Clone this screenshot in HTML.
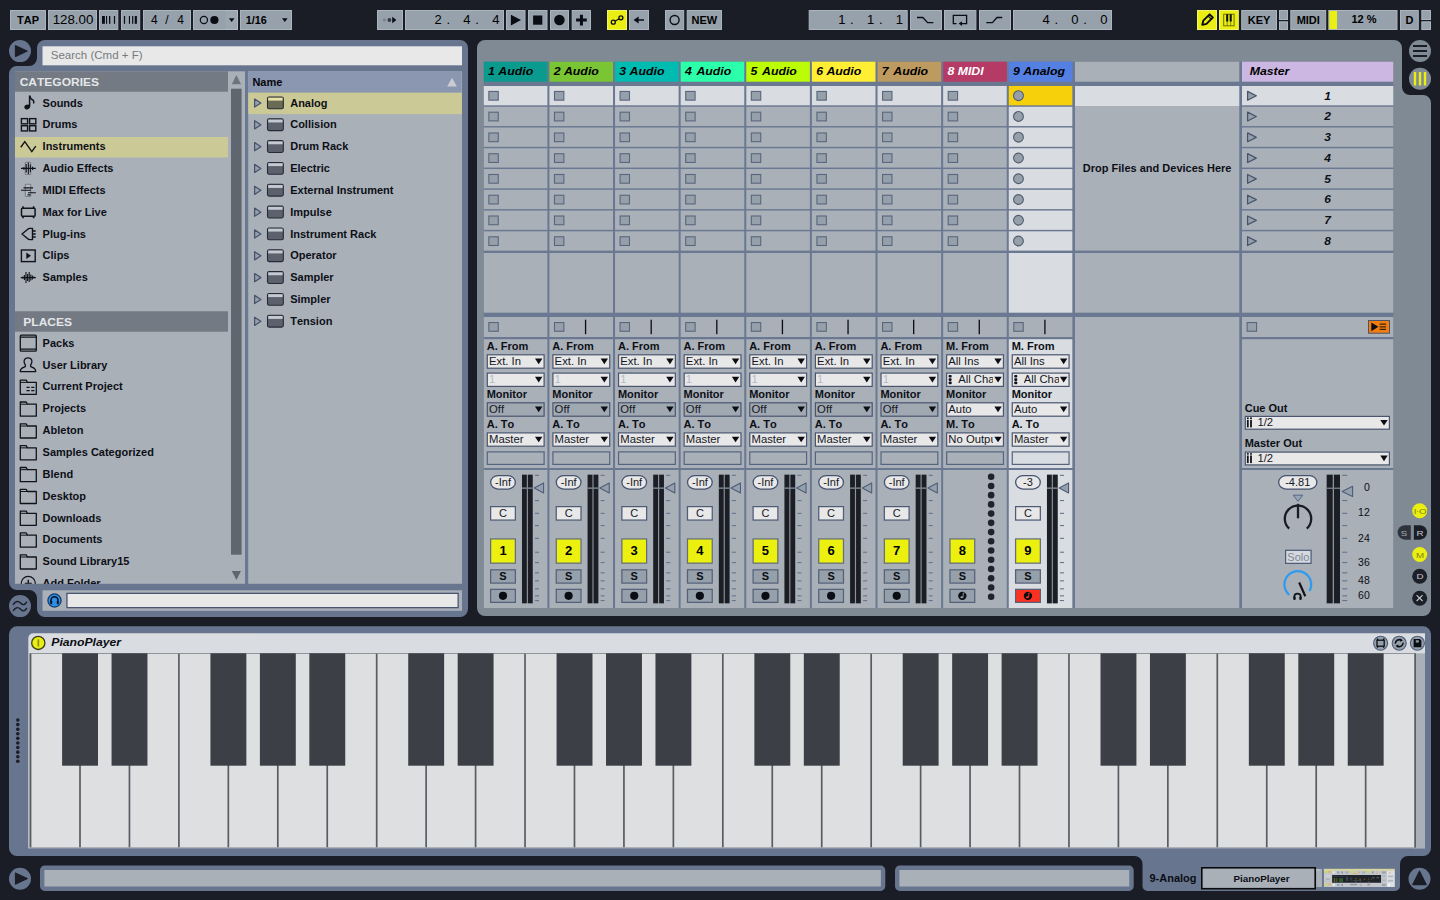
<!DOCTYPE html>
<html lang="en"><head><meta charset="utf-8"><title>Live Set</title>
<style>
*{margin:0;padding:0}
html,body{width:1440px;height:900px;overflow:hidden;background:#1a1d25}
body{position:relative;font-family:"Liberation Sans",sans-serif;font-kerning:none}
body div{position:absolute;box-sizing:border-box}
.t{white-space:nowrap}
svg{position:absolute;left:0;top:0;pointer-events:none}
</style></head>
<body>
<svg width="1440" height="900" viewBox="0 0 1440 900">
<path fill="#68758f" d="M45,40 H460 a8,8 0 0 1 8,8 V609 a8,8 0 0 1 -8,8 H45 a8,8 0 0 1 -8,-8 V598 a8,8 0 0 0 -8,-8 H17 a8,8 0 0 1 -8,-8 V74 a8,8 0 0 1 8,-8 H29 a8,8 0 0 0 8,-8 V48 a8,8 0 0 1 8,-8 Z"/>
<path fill="#808a94" d="M485,40 H1394 a8,8 0 0 1 8,8 V87 a8,8 0 0 0 8,8 H1423 a8,8 0 0 1 8,8 V608 a8,8 0 0 1 -8,8 H485 a8,8 0 0 1 -8,-8 V48 a8,8 0 0 1 8,-8 Z"/>
<path fill="#68758f" d="M17,626.3 H1423 a8,8 0 0 1 8,8 V848 a8,8 0 0 1 -8,8 H1408 a8,8 0 0 0 -8,8 V886 a5,5 0 0 1 -5,5 H1147.5 a5,5 0 0 1 -5,-5 V864 a8,8 0 0 0 -8,-8 H17 a8,8 0 0 1 -8,-8 V634.3 a8,8 0 0 1 8,-8 Z"/>
<circle cx="20" cy="51.1" r="11" fill="#68758f"/>
<circle cx="20" cy="606.1" r="11" fill="#68758f"/>
<circle cx="20" cy="878.8" r="11" fill="#68758f"/>
<circle cx="1419.5" cy="878.7" r="11" fill="#68758f"/>
<circle cx="1420" cy="51" r="11" fill="#808a94"/>
<circle cx="1420" cy="78.7" r="11" fill="#808a94"/>
<path d="M15.4,45.5 L27.3,51.1 L15.4,56.7 Z" fill="#1a1d25" stroke="#1a1d25" stroke-width="1" stroke-linejoin="round"/>
<path d="M13.4,604.4 C15.4,600.6 18.6,600.9 20.6,603 S24.6,605.6 26.6,602.2 M13.4,610.6 C15.4,606.8 18.6,607.1 20.6,609.2 S24.6,611.8 26.6,608.4" fill="none" stroke="#1a1d25" stroke-width="1.4" stroke-linecap="round"/>
<path d="M15.4,872.9 L27.5,878.6 L15.4,884.3 Z" fill="#1a1d25" stroke="#1a1d25" stroke-width="1" stroke-linejoin="round"/>
<path d="M1419.5,871.5 L1426,884.5 L1413,884.5 Z" fill="#1a1d25" stroke="#1a1d25" stroke-width="1.5" stroke-linejoin="round"/>
<path d="M1413,46 h14 M1413,51 h14 M1413,56 h14" stroke="#1a1d25" stroke-width="2.2"/>
<path d="M1415,72 v13.5 M1420,72 v13.5 M1425,72 v13.5" stroke="#eaee12" stroke-width="2.4"/>
<rect x="10.50" y="10.50" width="35.00" height="19.00" fill="#96a1ab" stroke="#aab5be" stroke-width="1"/>
<rect x="48.50" y="10.50" width="48.00" height="19.00" fill="#96a1ab" stroke="#aab5be" stroke-width="1"/>
<rect x="99.50" y="10.50" width="18.30" height="19.00" fill="#96a1ab" stroke="#aab5be" stroke-width="1"/>
<rect x="121.50" y="10.50" width="18.20" height="19.00" fill="#96a1ab" stroke="#aab5be" stroke-width="1"/>
<rect x="102" y="16" width="2.9" height="7.8" fill="#0b0d15"/>
<rect x="106" y="16" width="1.1" height="7.8" fill="#0b0d15"/>
<rect x="109" y="16" width="1.3" height="7.8" fill="#0b0d15"/>
<rect x="113.9" y="16" width="1.2" height="7.8" fill="#0b0d15"/>
<rect x="123.9" y="16" width="1.2" height="7.8" fill="#0b0d15"/>
<rect x="128.9" y="16" width="1.1" height="7.8" fill="#0b0d15"/>
<rect x="132.1" y="16" width="1.1" height="7.8" fill="#0b0d15"/>
<rect x="133.2" y="16" width="1.8" height="7.8" fill="#6f7780"/>
<rect x="135" y="16" width="1.9" height="7.8" fill="#0b0d15"/>
<rect x="143.50" y="10.50" width="47.00" height="19.00" fill="#96a1ab" stroke="#aab5be" stroke-width="1"/>
<rect x="193.50" y="10.50" width="44.00" height="19.00" fill="#96a1ab" stroke="#aab5be" stroke-width="1"/>
<rect x="225.50" y="10.00" width="12.50" height="20.00" fill="rgba(255,255,255,.06)"/>
<circle cx="203.9" cy="20" r="3.6" fill="none" stroke="#0b0d15" stroke-width="1.2"/><circle cx="214.4" cy="20" r="4.1" fill="#0b0d15"/>
<path d="M228.9,18.3 h5.6 l-2.8,3.6 Z" fill="#0b0d15"/>
<rect x="240.50" y="10.50" width="51.00" height="19.00" fill="#96a1ab" stroke="#aab5be" stroke-width="1"/>
<path d="M282,18.3 h5.6 l-2.8,3.6 Z" fill="#0b0d15"/>
<rect x="377.50" y="10.50" width="25.00" height="19.00" fill="#96a1ab" stroke="#aab5be" stroke-width="1"/>
<circle cx="384.4" cy="20" r="1.5" fill="#77828f"/><circle cx="389.4" cy="20" r="1.9" fill="#343a4a"/><path d="M392.2,16.8 L396.4,20 L392.2,23.3 Z" fill="#0b0d15"/>
<rect x="405.50" y="10.50" width="98.00" height="19.00" fill="#96a1ab" stroke="#aab5be" stroke-width="1"/>
<rect x="506.50" y="10.50" width="18.50" height="19.00" fill="#96a1ab" stroke="#aab5be" stroke-width="1"/>
<path d="M510.9,14.8 L521,20.1 L510.9,25.5 Z" fill="#0b0d15"/>
<rect x="528.50" y="10.50" width="18.50" height="19.00" fill="#96a1ab" stroke="#aab5be" stroke-width="1"/>
<rect x="533.1" y="15.5" width="9.2" height="9.2" fill="#0b0d15"/>
<rect x="550.50" y="10.50" width="18.00" height="19.00" fill="#96a1ab" stroke="#aab5be" stroke-width="1"/>
<circle cx="559.4" cy="20" r="5.3" fill="#0b0d15"/>
<rect x="572.20" y="10.50" width="18.30" height="19.00" fill="#96a1ab" stroke="#aab5be" stroke-width="1"/>
<path d="M576.1,20 h10.7 M581.45,14.7 v10.7" stroke="#0b0d15" stroke-width="3"/>
<rect x="607.50" y="10.50" width="19.00" height="19.00" fill="#eaee12" stroke="#f2f56a" stroke-width="1"/>
<path d="M614.8,21.3 L619.4,18.7" stroke="#0b0d15" stroke-width="1.3"/><circle cx="613.3" cy="22.2" r="2" fill="none" stroke="#0b0d15" stroke-width="1.3"/><circle cx="620.9" cy="17.8" r="2" fill="none" stroke="#0b0d15" stroke-width="1.3"/>
<rect x="629.50" y="10.50" width="19.00" height="19.00" fill="#96a1ab" stroke="#aab5be" stroke-width="1"/>
<path d="M636,20 H644" stroke="#0b0d15" stroke-width="1.5"/><path d="M633.6,20 L638.6,16.6 V23.4 Z" fill="#0b0d15"/>
<rect x="665.50" y="10.50" width="18.20" height="19.00" fill="#96a1ab" stroke="#aab5be" stroke-width="1"/>
<circle cx="674.6" cy="20" r="4.5" fill="none" stroke="#0b0d15" stroke-width="1.4"/>
<rect x="687.20" y="10.50" width="34.30" height="19.00" fill="#96a1ab" stroke="#aab5be" stroke-width="1"/>
<rect x="809.20" y="10.50" width="98.00" height="19.00" fill="#96a1ab" stroke="#aab5be" stroke-width="1"/>
<rect x="910.50" y="10.50" width="31.00" height="19.00" fill="#96a1ab" stroke="#aab5be" stroke-width="1"/>
<path d="M917,17.5 H922.8 L927.6,22.6 H933.4" fill="none" stroke="#0b0d15" stroke-width="1.3"/>
<rect x="944.50" y="10.50" width="31.40" height="19.00" fill="#96a1ab" stroke="#aab5be" stroke-width="1"/>
<path d="M956.5,23.6 H953.3 V15.4 H966.6 V23.6 H961" fill="none" stroke="#0b0d15" stroke-width="1.3"/><path d="M958.6,23.6 L962,21.3 V25.9 Z" fill="#0b0d15"/>
<rect x="979.50" y="10.50" width="31.00" height="19.00" fill="#96a1ab" stroke="#aab5be" stroke-width="1"/>
<path d="M986.3,22.6 H992.4 L997,17.5 H1002.2" fill="none" stroke="#0b0d15" stroke-width="1.3"/>
<rect x="1013.50" y="10.50" width="98.00" height="19.00" fill="#96a1ab" stroke="#aab5be" stroke-width="1"/>
<rect x="1197.50" y="10.50" width="19.00" height="19.00" fill="#eaee12" stroke="#f2f56a" stroke-width="1"/>
<rect x="1219.50" y="10.50" width="18.80" height="19.00" fill="#eaee12" stroke="#f2f56a" stroke-width="1"/>
<path d="M1202.3,24.8 L1203.3,20.6 L1209.6,14.3 L1212.8,17.5 L1206.5,23.8 Z" fill="none" stroke="#0b0d15" stroke-width="1.9" stroke-linejoin="round"/><path d="M1208,15.9 L1211.2,19.1" stroke="#0b0d15" stroke-width="1.3"/>
<rect x="1223.7" y="14.2" width="10.4" height="11.6" fill="none" stroke="#6c6e10" stroke-width="1"/><path d="M1227.2,14.2 V25.8 M1230.7,14.2 V25.8" stroke="#6c6e10" stroke-width=".8"/><path d="M1227.2,14.2 V21.6 M1230.7,14.2 V21.6" stroke="#0b0d15" stroke-width="2"/>
<rect x="1241.70" y="10.50" width="34.80" height="19.00" fill="#96a1ab" stroke="#aab5be" stroke-width="1"/>
<rect x="1279.50" y="10.50" width="8.00" height="9.00" fill="#96a1ab" stroke="#aab5be" stroke-width="1"/>
<rect x="1279.50" y="21.80" width="8.00" height="7.70" fill="#96a1ab" stroke="#aab5be" stroke-width="1"/>
<rect x="1290.80" y="10.50" width="34.90" height="19.00" fill="#96a1ab" stroke="#aab5be" stroke-width="1"/>
<rect x="1328.80" y="10.50" width="68.20" height="19.00" fill="#96a1ab" stroke="#aab5be" stroke-width="1"/>
<rect x="1329.30" y="11.00" width="7.70" height="18.00" fill="#eaee12"/>
<rect x="1400.50" y="10.50" width="17.80" height="19.00" fill="#96a1ab" stroke="#aab5be" stroke-width="1"/>
<rect x="1421.80" y="10.50" width="8.70" height="9.00" fill="#96a1ab" stroke="#aab5be" stroke-width="1"/>
<rect x="1421.80" y="21.80" width="8.70" height="7.70" fill="#96a1ab" stroke="#aab5be" stroke-width="1"/>
<rect x="42.50" y="46.30" width="419.50" height="19.00" fill="#e8e8e8"/>
<rect x="15.00" y="71.30" width="230.00" height="512.50" fill="#a9b0b8"/>
<rect x="15.00" y="71.30" width="213.00" height="20.40" fill="#737a83"/>
<rect x="15.00" y="311.30" width="213.00" height="20.40" fill="#737a83"/>
<rect x="15.00" y="137.00" width="213.00" height="20.50" fill="#cbc996"/>
<rect x="231.00" y="88.70" width="10.60" height="466.00" fill="#5f6670"/>
<path d="M231.8,84.3 L241,84.3 L236.4,75 Z" fill="#6e747c"/><path d="M231.8,571 L241,571 L236.4,580 Z" fill="#5f6670"/>
<rect x="245.00" y="71.30" width="3.20" height="512.50" fill="#6a7892"/>
<rect x="248.20" y="71.30" width="213.80" height="512.50" fill="#a9b0b8"/>
<rect x="248.20" y="71.30" width="213.30" height="21.40" fill="#8b97b0"/>
<path d="M447.2,86.5 L456.8,86.5 L452,77.8 Z" fill="#c9ccd2"/>
<rect x="248.20" y="92.70" width="213.80" height="21.40" fill="#cbc996"/>
<path d="M254.6,98.90 L260.9,103.00 L254.6,107.10 Z" fill="#95a0ad" stroke="#46536b" stroke-width="1.25" stroke-linejoin="round"/>
<rect x="267.5" y="97.00" width="15.8" height="11.8" rx="1.6" fill="#6a6b55" stroke="#262a34" stroke-width="1.1"/><rect x="268.2" y="97.70" width="14.4" height="2.9" fill="#e6e2a8"/>
<path d="M254.6,120.73 L260.9,124.83 L254.6,128.93 Z" fill="#95a0ad" stroke="#46536b" stroke-width="1.25" stroke-linejoin="round"/>
<rect x="267.5" y="118.83" width="15.8" height="11.8" rx="1.6" fill="#5b626e" stroke="#262a34" stroke-width="1.1"/><rect x="268.2" y="119.53" width="14.4" height="2.9" fill="#c4cad2"/>
<path d="M254.6,142.56 L260.9,146.66 L254.6,150.76 Z" fill="#95a0ad" stroke="#46536b" stroke-width="1.25" stroke-linejoin="round"/>
<rect x="267.5" y="140.66" width="15.8" height="11.8" rx="1.6" fill="#5b626e" stroke="#262a34" stroke-width="1.1"/><rect x="268.2" y="141.36" width="14.4" height="2.9" fill="#c4cad2"/>
<path d="M254.6,164.39 L260.9,168.49 L254.6,172.59 Z" fill="#95a0ad" stroke="#46536b" stroke-width="1.25" stroke-linejoin="round"/>
<rect x="267.5" y="162.49" width="15.8" height="11.8" rx="1.6" fill="#5b626e" stroke="#262a34" stroke-width="1.1"/><rect x="268.2" y="163.19" width="14.4" height="2.9" fill="#c4cad2"/>
<path d="M254.6,186.22 L260.9,190.32 L254.6,194.42 Z" fill="#95a0ad" stroke="#46536b" stroke-width="1.25" stroke-linejoin="round"/>
<rect x="267.5" y="184.32" width="15.8" height="11.8" rx="1.6" fill="#5b626e" stroke="#262a34" stroke-width="1.1"/><rect x="268.2" y="185.02" width="14.4" height="2.9" fill="#c4cad2"/>
<path d="M254.6,208.05 L260.9,212.15 L254.6,216.25 Z" fill="#95a0ad" stroke="#46536b" stroke-width="1.25" stroke-linejoin="round"/>
<rect x="267.5" y="206.15" width="15.8" height="11.8" rx="1.6" fill="#5b626e" stroke="#262a34" stroke-width="1.1"/><rect x="268.2" y="206.85" width="14.4" height="2.9" fill="#c4cad2"/>
<path d="M254.6,229.88 L260.9,233.98 L254.6,238.08 Z" fill="#95a0ad" stroke="#46536b" stroke-width="1.25" stroke-linejoin="round"/>
<rect x="267.5" y="227.98" width="15.8" height="11.8" rx="1.6" fill="#5b626e" stroke="#262a34" stroke-width="1.1"/><rect x="268.2" y="228.68" width="14.4" height="2.9" fill="#c4cad2"/>
<path d="M254.6,251.71 L260.9,255.81 L254.6,259.91 Z" fill="#95a0ad" stroke="#46536b" stroke-width="1.25" stroke-linejoin="round"/>
<rect x="267.5" y="249.81" width="15.8" height="11.8" rx="1.6" fill="#5b626e" stroke="#262a34" stroke-width="1.1"/><rect x="268.2" y="250.51" width="14.4" height="2.9" fill="#c4cad2"/>
<path d="M254.6,273.54 L260.9,277.64 L254.6,281.74 Z" fill="#95a0ad" stroke="#46536b" stroke-width="1.25" stroke-linejoin="round"/>
<rect x="267.5" y="271.64" width="15.8" height="11.8" rx="1.6" fill="#5b626e" stroke="#262a34" stroke-width="1.1"/><rect x="268.2" y="272.34" width="14.4" height="2.9" fill="#c4cad2"/>
<path d="M254.6,295.37 L260.9,299.47 L254.6,303.57 Z" fill="#95a0ad" stroke="#46536b" stroke-width="1.25" stroke-linejoin="round"/>
<rect x="267.5" y="293.47" width="15.8" height="11.8" rx="1.6" fill="#5b626e" stroke="#262a34" stroke-width="1.1"/><rect x="268.2" y="294.17" width="14.4" height="2.9" fill="#c4cad2"/>
<path d="M254.6,317.20 L260.9,321.30 L254.6,325.40 Z" fill="#95a0ad" stroke="#46536b" stroke-width="1.25" stroke-linejoin="round"/>
<rect x="267.5" y="315.30" width="15.8" height="11.8" rx="1.6" fill="#5b626e" stroke="#262a34" stroke-width="1.1"/><rect x="268.2" y="316.00" width="14.4" height="2.9" fill="#c4cad2"/>
<rect x="42.50" y="590.30" width="419.50" height="20.50" fill="#a9b0b8"/>
<rect x="66.95" y="593.35" width="391.20" height="14.30" fill="#e8e8e8" stroke="#4a5670" stroke-width="1.3"/>
<circle cx="54.5" cy="600.5" r="6.6" fill="#2b8fe6" stroke="#15356a" stroke-width="1.2"/><path d="M51,602.3 v-2 a3.5,3.5 0 0 1 7,0 v2" fill="none" stroke="#0a1224" stroke-width="1.5"/><rect x="50.2" y="600.8" width="2" height="3.4" rx=".8" fill="#0a1224"/><rect x="56.8" y="600.8" width="2" height="3.4" rx=".8" fill="#0a1224"/>
<path d="M29.6,95.7 V106.5" stroke="#11131a" stroke-width="1.5"/><ellipse cx="27.2" cy="107" rx="2.9" ry="2.3" fill="#11131a" transform="rotate(-20 27.2 107)"/><path d="M29.6,95.7 q.5,3.2 3.6,4.6 q1.2,1.2 .3,3.2" fill="none" stroke="#11131a" stroke-width="1.5"/>
<rect x="21.4" y="118.63" width="6.2" height="5.2" fill="none" stroke="#11131a" stroke-width="1.4"/>
<rect x="21.4" y="125.73" width="6.2" height="5.2" fill="none" stroke="#11131a" stroke-width="1.4"/>
<rect x="29.599999999999998" y="118.63" width="6.2" height="5.2" fill="none" stroke="#11131a" stroke-width="1.4"/>
<rect x="29.599999999999998" y="125.73" width="6.2" height="5.2" fill="none" stroke="#11131a" stroke-width="1.4"/>
<path d="M20.8,147.26 L24.8,141.66 L31.8,151.66 L35.8,146.06" fill="none" stroke="#11131a" stroke-width="1.4" stroke-linejoin="miter"/>
<rect x="25.3" y="162.20" width="5.4" height="12.3" rx=".8" fill="#b4bac2" stroke="#79818c" stroke-width="1.1"/>
<path d="M21,168.30 H35.8 M23.9,166.90 v2.8 M26.2,164.10 v8.4 M28.3,162.50 v11.6 M30.3,164.40 v7.8 M32.6,166.70 v3.2" stroke="#11131a" stroke-width="1.15" fill="none"/>
<rect x="25.3" y="184.20" width="5.4" height="12.3" rx=".8" fill="#b4bac2" stroke="#79818c" stroke-width="1.1"/>
<path d="M23.5,187.80 H33 M21,190.20 H31 M28,192.70 H35.8 M27.5,194.90 H30.5" stroke="#11131a" stroke-width="1.15" fill="none"/>
<rect x="21.5" y="208.35" width="13.6" height="7.8" rx="1" fill="none" stroke="#11131a" stroke-width="1.5"/><path d="M23,206.15 v2.2 M33.6,206.15 v2.2 M23,216.15 v2.2 M33.6,216.15 v2.2" stroke="#11131a" stroke-width="1.6"/>
<path d="M22,234.00 L27.5,229.50 Q28.5,228.40 30,228.40 H32.5 V239.60 H30 Q28.5,239.60 27.5,238.50 Z" fill="none" stroke="#11131a" stroke-width="1.4" stroke-linejoin="round"/><path d="M32.5,231.00 h3.2 M32.5,234.00 h3.2 M32.5,237.00 h3.2" stroke="#11131a" stroke-width="1.4"/>
<rect x="21.4" y="250.00" width="13.8" height="11.6" fill="none" stroke="#11131a" stroke-width="1.4"/><path d="M26.3,252.50 L31,255.80 L26.3,259.10 Z" fill="#11131a"/>
<path d="M20.8,277.60 H35.8 M22.8,276.40 v2.4 M24.4,275.10 v5 M26,272.10 v11 M27.6,274.10 v7 M29.2,272.10 v10 M30.8,274.60 v6 M32.4,275.60 v4 M34,276.60 v2" stroke="#11131a" stroke-width="1.1" fill="none"/>
<rect x="20.3" y="335.20" width="16" height="16" rx="1" fill="none" stroke="#11131a" stroke-width="1.3"/><path d="M20.3,337.20 h16 M20.3,349.20 h16" stroke="#11131a" stroke-width="1.3"/>
<path d="M20.3,371.60 q0,-3.2 3.8,-4.4 q1.8,-.6 1.2,-2.2 q-1.4,-1.8 -1.2,-4 q.3,-3.2 3.9,-3.2 q3.6,0 3.9,3.2 q.2,2.2 -1.2,4 q-.6,1.6 1.2,2.2 q3.8,1.2 3.8,4.4 Z" fill="none" stroke="#11131a" stroke-width="1.3" stroke-linejoin="round"/>
<clipPath id="pl"><rect x="15" y="332" width="213" height="251.8"/></clipPath><g clip-path="url(#pl)">
<path d="M20.3,394.36 V380.16 H26.2 L27.4,382.36 H36.3 V394.36 Z" fill="none" stroke="#11131a" stroke-width="1.3" stroke-linejoin="round"/><path d="M20.3,382.36 H27.4" stroke="#11131a" stroke-width="1"/>
<path d="M20.3,416.19 V401.99 H26.2 L27.4,404.19 H36.3 V416.19 Z" fill="none" stroke="#11131a" stroke-width="1.3" stroke-linejoin="round"/><path d="M20.3,404.19 H27.4" stroke="#11131a" stroke-width="1"/>
<path d="M20.3,438.02 V423.82 H26.2 L27.4,426.02 H36.3 V438.02 Z" fill="none" stroke="#11131a" stroke-width="1.3" stroke-linejoin="round"/><path d="M20.3,426.02 H27.4" stroke="#11131a" stroke-width="1"/>
<path d="M20.3,459.85 V445.65 H26.2 L27.4,447.85 H36.3 V459.85 Z" fill="none" stroke="#11131a" stroke-width="1.3" stroke-linejoin="round"/><path d="M20.3,447.85 H27.4" stroke="#11131a" stroke-width="1"/>
<path d="M20.3,481.68 V467.48 H26.2 L27.4,469.68 H36.3 V481.68 Z" fill="none" stroke="#11131a" stroke-width="1.3" stroke-linejoin="round"/><path d="M20.3,469.68 H27.4" stroke="#11131a" stroke-width="1"/>
<path d="M20.3,503.51 V489.31 H26.2 L27.4,491.51 H36.3 V503.51 Z" fill="none" stroke="#11131a" stroke-width="1.3" stroke-linejoin="round"/><path d="M20.3,491.51 H27.4" stroke="#11131a" stroke-width="1"/>
<path d="M20.3,525.34 V511.14 H26.2 L27.4,513.34 H36.3 V525.34 Z" fill="none" stroke="#11131a" stroke-width="1.3" stroke-linejoin="round"/><path d="M20.3,513.34 H27.4" stroke="#11131a" stroke-width="1"/>
<path d="M20.3,547.17 V532.97 H26.2 L27.4,535.17 H36.3 V547.17 Z" fill="none" stroke="#11131a" stroke-width="1.3" stroke-linejoin="round"/><path d="M20.3,535.17 H27.4" stroke="#11131a" stroke-width="1"/>
<path d="M20.3,569.00 V554.80 H26.2 L27.4,557.00 H36.3 V569.00 Z" fill="none" stroke="#11131a" stroke-width="1.3" stroke-linejoin="round"/><path d="M20.3,557.00 H27.4" stroke="#11131a" stroke-width="1"/>
<path d="M26.5,387.36 h3.2 M31.2,387.36 h3.2 M26.5,390.56 h3.2 M31.2,390.56 h3.2" stroke="#11131a" stroke-width="1.2"/>
<circle cx="28.3" cy="583.33" r="7" fill="none" stroke="#11131a" stroke-width="1.3"/><path d="M24.8,583.33 h7 M28.3,579.83 v7" stroke="#11131a" stroke-width="1.4"/>
</g>
<rect x="483.80" y="61.70" width="909.50" height="546.30" fill="#6a7892"/>
<rect x="483.80" y="61.70" width="63.60" height="20.00" fill="#0a9b8e"/>
<rect x="483.80" y="86.00" width="63.60" height="19.30" fill="#d9dce0"/>
<rect x="488.85" y="91.45" width="9.40" height="8.70" fill="#95a0ab" stroke="#5a667e" stroke-width="1.1"/>
<rect x="483.80" y="106.76" width="63.60" height="19.30" fill="#a9b0b8"/>
<rect x="488.85" y="112.21" width="9.40" height="8.70" fill="#95a0ab" stroke="#5a667e" stroke-width="1.1"/>
<rect x="483.80" y="127.52" width="63.60" height="19.30" fill="#a9b0b8"/>
<rect x="488.85" y="132.97" width="9.40" height="8.70" fill="#95a0ab" stroke="#5a667e" stroke-width="1.1"/>
<rect x="483.80" y="148.28" width="63.60" height="19.30" fill="#a9b0b8"/>
<rect x="488.85" y="153.73" width="9.40" height="8.70" fill="#95a0ab" stroke="#5a667e" stroke-width="1.1"/>
<rect x="483.80" y="169.04" width="63.60" height="19.30" fill="#a9b0b8"/>
<rect x="488.85" y="174.49" width="9.40" height="8.70" fill="#95a0ab" stroke="#5a667e" stroke-width="1.1"/>
<rect x="483.80" y="189.80" width="63.60" height="19.30" fill="#a9b0b8"/>
<rect x="488.85" y="195.25" width="9.40" height="8.70" fill="#95a0ab" stroke="#5a667e" stroke-width="1.1"/>
<rect x="483.80" y="210.56" width="63.60" height="19.30" fill="#a9b0b8"/>
<rect x="488.85" y="216.01" width="9.40" height="8.70" fill="#95a0ab" stroke="#5a667e" stroke-width="1.1"/>
<rect x="483.80" y="231.32" width="63.60" height="19.30" fill="#a9b0b8"/>
<rect x="488.85" y="236.77" width="9.40" height="8.70" fill="#95a0ab" stroke="#5a667e" stroke-width="1.1"/>
<rect x="483.80" y="253.00" width="63.60" height="59.70" fill="#a9b0b8"/>
<rect x="483.80" y="317.00" width="63.60" height="20.00" fill="#a9b0b8"/>
<rect x="488.85" y="322.55" width="9.40" height="8.70" fill="#95a0ab" stroke="#5a667e" stroke-width="1.1"/>
<rect x="483.80" y="339.20" width="63.60" height="128.80" fill="#a9b0b8"/>
<rect x="483.80" y="470.00" width="63.60" height="138.00" fill="#a9b0b8"/>
<rect x="487.30" y="354.80" width="56.80" height="13.40" fill="#e8e8e8" stroke="#4a5670" stroke-width="1.2"/>
<path d="M535.00,358.60 H542.40 L538.70,364.20 Z" fill="#0b0d12"/>
<rect x="487.30" y="373.10" width="56.80" height="13.30" fill="#e8e8e8" stroke="#4a5670" stroke-width="1.2"/>
<path d="M535.00,376.85 H542.40 L538.70,382.45 Z" fill="#0b0d12"/>
<rect x="487.30" y="402.80" width="56.80" height="13.40" fill="#a0a8b2" stroke="#4a5670" stroke-width="1.2"/>
<path d="M535.00,406.60 H542.40 L538.70,412.20 Z" fill="#0b0d12"/>
<rect x="487.30" y="432.90" width="56.80" height="13.30" fill="#e8e8e8" stroke="#4a5670" stroke-width="1.2"/>
<path d="M535.00,436.65 H542.40 L538.70,442.25 Z" fill="#0b0d12"/>
<rect x="487.30" y="451.90" width="56.80" height="12.50" fill="none" stroke="#56647f" stroke-width="1.2"/>
<rect x="490.65" y="475.65" width="24.70" height="13.40" rx="7.35" fill="#e8e8e8" stroke="#47536e" stroke-width="1.3"/>
<rect x="490.62" y="506.62" width="24.75" height="13.45" fill="#e8e8e8" stroke="#505c76" stroke-width="1.25"/>
<rect x="522.00" y="474.7" width="10.7" height="128.6" fill="#8d949c"/><rect x="522.00" y="474.7" width="4.8" height="128.6" fill="#1b1e25"/><rect x="527.95" y="474.7" width="4.75" height="128.6" fill="#1b1e25"/><rect x="522.00" y="487.4" width="10.7" height="1.5" fill="#7a828c"/>
<path d="M534.20,487.9 L543.60,482.9 V492.9 Z" fill="#95a0ae" stroke="#4f5d78" stroke-width="1.1" stroke-linejoin="round"/>
<rect x="535.00" y="474.80" width="4" height="1.1" fill="#66748f"/>
<rect x="535.00" y="500.00" width="4" height="1.1" fill="#66748f"/>
<rect x="535.00" y="512.80" width="4" height="1.1" fill="#66748f"/>
<rect x="535.00" y="525.00" width="4" height="1.1" fill="#66748f"/>
<rect x="535.00" y="537.80" width="4" height="1.1" fill="#66748f"/>
<rect x="535.00" y="551.70" width="4" height="1.1" fill="#66748f"/>
<rect x="535.00" y="562.00" width="4" height="1.1" fill="#66748f"/>
<rect x="535.00" y="572.30" width="4" height="1.1" fill="#66748f"/>
<rect x="535.00" y="580.30" width="4" height="1.1" fill="#66748f"/>
<rect x="535.00" y="588.30" width="4" height="1.1" fill="#66748f"/>
<rect x="535.00" y="595.30" width="4" height="1.1" fill="#66748f"/>
<rect x="535.00" y="600.00" width="4" height="1.1" fill="#66748f"/>
<rect x="490.62" y="538.92" width="24.75" height="24.25" fill="#ecf00e" stroke="#646f7c" stroke-width="1.25"/>
<rect x="490.62" y="569.83" width="24.75" height="13.25" fill="#95a0ab" stroke="#566179" stroke-width="1.25"/>
<rect x="490.62" y="589.33" width="24.75" height="13.05" fill="#95a0ab" stroke="#566179" stroke-width="1.25"/>
<circle cx="503.00" cy="595.85" r="4.1" fill="#0b0d15"/>
<rect x="549.42" y="61.70" width="63.60" height="20.00" fill="#7ac534"/>
<rect x="549.42" y="86.00" width="63.60" height="19.30" fill="#d9dce0"/>
<rect x="554.47" y="91.45" width="9.40" height="8.70" fill="#95a0ab" stroke="#5a667e" stroke-width="1.1"/>
<rect x="549.42" y="106.76" width="63.60" height="19.30" fill="#a9b0b8"/>
<rect x="554.47" y="112.21" width="9.40" height="8.70" fill="#95a0ab" stroke="#5a667e" stroke-width="1.1"/>
<rect x="549.42" y="127.52" width="63.60" height="19.30" fill="#a9b0b8"/>
<rect x="554.47" y="132.97" width="9.40" height="8.70" fill="#95a0ab" stroke="#5a667e" stroke-width="1.1"/>
<rect x="549.42" y="148.28" width="63.60" height="19.30" fill="#a9b0b8"/>
<rect x="554.47" y="153.73" width="9.40" height="8.70" fill="#95a0ab" stroke="#5a667e" stroke-width="1.1"/>
<rect x="549.42" y="169.04" width="63.60" height="19.30" fill="#a9b0b8"/>
<rect x="554.47" y="174.49" width="9.40" height="8.70" fill="#95a0ab" stroke="#5a667e" stroke-width="1.1"/>
<rect x="549.42" y="189.80" width="63.60" height="19.30" fill="#a9b0b8"/>
<rect x="554.47" y="195.25" width="9.40" height="8.70" fill="#95a0ab" stroke="#5a667e" stroke-width="1.1"/>
<rect x="549.42" y="210.56" width="63.60" height="19.30" fill="#a9b0b8"/>
<rect x="554.47" y="216.01" width="9.40" height="8.70" fill="#95a0ab" stroke="#5a667e" stroke-width="1.1"/>
<rect x="549.42" y="231.32" width="63.60" height="19.30" fill="#a9b0b8"/>
<rect x="554.47" y="236.77" width="9.40" height="8.70" fill="#95a0ab" stroke="#5a667e" stroke-width="1.1"/>
<rect x="549.42" y="253.00" width="63.60" height="59.70" fill="#a9b0b8"/>
<rect x="549.42" y="317.00" width="63.60" height="20.00" fill="#a9b0b8"/>
<rect x="554.47" y="322.55" width="9.40" height="8.70" fill="#95a0ab" stroke="#5a667e" stroke-width="1.1"/>
<rect x="584.92" y="319.70" width="1.30" height="14.50" fill="#0b0d15"/>
<rect x="549.42" y="339.20" width="63.60" height="128.80" fill="#a9b0b8"/>
<rect x="549.42" y="470.00" width="63.60" height="138.00" fill="#a9b0b8"/>
<rect x="552.92" y="354.80" width="56.80" height="13.40" fill="#e8e8e8" stroke="#4a5670" stroke-width="1.2"/>
<path d="M600.62,358.60 H608.02 L604.32,364.20 Z" fill="#0b0d12"/>
<rect x="552.92" y="373.10" width="56.80" height="13.30" fill="#e8e8e8" stroke="#4a5670" stroke-width="1.2"/>
<path d="M600.62,376.85 H608.02 L604.32,382.45 Z" fill="#0b0d12"/>
<rect x="552.92" y="402.80" width="56.80" height="13.40" fill="#a0a8b2" stroke="#4a5670" stroke-width="1.2"/>
<path d="M600.62,406.60 H608.02 L604.32,412.20 Z" fill="#0b0d12"/>
<rect x="552.92" y="432.90" width="56.80" height="13.30" fill="#e8e8e8" stroke="#4a5670" stroke-width="1.2"/>
<path d="M600.62,436.65 H608.02 L604.32,442.25 Z" fill="#0b0d12"/>
<rect x="552.92" y="451.90" width="56.80" height="12.50" fill="none" stroke="#56647f" stroke-width="1.2"/>
<rect x="556.27" y="475.65" width="24.70" height="13.40" rx="7.35" fill="#e8e8e8" stroke="#47536e" stroke-width="1.3"/>
<rect x="556.25" y="506.62" width="24.75" height="13.45" fill="#e8e8e8" stroke="#505c76" stroke-width="1.25"/>
<rect x="587.62" y="474.7" width="10.7" height="128.6" fill="#8d949c"/><rect x="587.62" y="474.7" width="4.8" height="128.6" fill="#1b1e25"/><rect x="593.57" y="474.7" width="4.75" height="128.6" fill="#1b1e25"/><rect x="587.62" y="487.4" width="10.7" height="1.5" fill="#7a828c"/>
<path d="M599.82,487.9 L609.22,482.9 V492.9 Z" fill="#95a0ae" stroke="#4f5d78" stroke-width="1.1" stroke-linejoin="round"/>
<rect x="600.62" y="474.80" width="4" height="1.1" fill="#66748f"/>
<rect x="600.62" y="500.00" width="4" height="1.1" fill="#66748f"/>
<rect x="600.62" y="512.80" width="4" height="1.1" fill="#66748f"/>
<rect x="600.62" y="525.00" width="4" height="1.1" fill="#66748f"/>
<rect x="600.62" y="537.80" width="4" height="1.1" fill="#66748f"/>
<rect x="600.62" y="551.70" width="4" height="1.1" fill="#66748f"/>
<rect x="600.62" y="562.00" width="4" height="1.1" fill="#66748f"/>
<rect x="600.62" y="572.30" width="4" height="1.1" fill="#66748f"/>
<rect x="600.62" y="580.30" width="4" height="1.1" fill="#66748f"/>
<rect x="600.62" y="588.30" width="4" height="1.1" fill="#66748f"/>
<rect x="600.62" y="595.30" width="4" height="1.1" fill="#66748f"/>
<rect x="600.62" y="600.00" width="4" height="1.1" fill="#66748f"/>
<rect x="556.25" y="538.92" width="24.75" height="24.25" fill="#ecf00e" stroke="#646f7c" stroke-width="1.25"/>
<rect x="556.25" y="569.83" width="24.75" height="13.25" fill="#95a0ab" stroke="#566179" stroke-width="1.25"/>
<rect x="556.25" y="589.33" width="24.75" height="13.05" fill="#95a0ab" stroke="#566179" stroke-width="1.25"/>
<circle cx="568.62" cy="595.85" r="4.1" fill="#0b0d15"/>
<rect x="615.04" y="61.70" width="63.60" height="20.00" fill="#00bbb0"/>
<rect x="615.04" y="86.00" width="63.60" height="19.30" fill="#d9dce0"/>
<rect x="620.09" y="91.45" width="9.40" height="8.70" fill="#95a0ab" stroke="#5a667e" stroke-width="1.1"/>
<rect x="615.04" y="106.76" width="63.60" height="19.30" fill="#a9b0b8"/>
<rect x="620.09" y="112.21" width="9.40" height="8.70" fill="#95a0ab" stroke="#5a667e" stroke-width="1.1"/>
<rect x="615.04" y="127.52" width="63.60" height="19.30" fill="#a9b0b8"/>
<rect x="620.09" y="132.97" width="9.40" height="8.70" fill="#95a0ab" stroke="#5a667e" stroke-width="1.1"/>
<rect x="615.04" y="148.28" width="63.60" height="19.30" fill="#a9b0b8"/>
<rect x="620.09" y="153.73" width="9.40" height="8.70" fill="#95a0ab" stroke="#5a667e" stroke-width="1.1"/>
<rect x="615.04" y="169.04" width="63.60" height="19.30" fill="#a9b0b8"/>
<rect x="620.09" y="174.49" width="9.40" height="8.70" fill="#95a0ab" stroke="#5a667e" stroke-width="1.1"/>
<rect x="615.04" y="189.80" width="63.60" height="19.30" fill="#a9b0b8"/>
<rect x="620.09" y="195.25" width="9.40" height="8.70" fill="#95a0ab" stroke="#5a667e" stroke-width="1.1"/>
<rect x="615.04" y="210.56" width="63.60" height="19.30" fill="#a9b0b8"/>
<rect x="620.09" y="216.01" width="9.40" height="8.70" fill="#95a0ab" stroke="#5a667e" stroke-width="1.1"/>
<rect x="615.04" y="231.32" width="63.60" height="19.30" fill="#a9b0b8"/>
<rect x="620.09" y="236.77" width="9.40" height="8.70" fill="#95a0ab" stroke="#5a667e" stroke-width="1.1"/>
<rect x="615.04" y="253.00" width="63.60" height="59.70" fill="#a9b0b8"/>
<rect x="615.04" y="317.00" width="63.60" height="20.00" fill="#a9b0b8"/>
<rect x="620.09" y="322.55" width="9.40" height="8.70" fill="#95a0ab" stroke="#5a667e" stroke-width="1.1"/>
<rect x="650.54" y="319.70" width="1.30" height="14.50" fill="#0b0d15"/>
<rect x="615.04" y="339.20" width="63.60" height="128.80" fill="#a9b0b8"/>
<rect x="615.04" y="470.00" width="63.60" height="138.00" fill="#a9b0b8"/>
<rect x="618.54" y="354.80" width="56.80" height="13.40" fill="#e8e8e8" stroke="#4a5670" stroke-width="1.2"/>
<path d="M666.24,358.60 H673.64 L669.94,364.20 Z" fill="#0b0d12"/>
<rect x="618.54" y="373.10" width="56.80" height="13.30" fill="#e8e8e8" stroke="#4a5670" stroke-width="1.2"/>
<path d="M666.24,376.85 H673.64 L669.94,382.45 Z" fill="#0b0d12"/>
<rect x="618.54" y="402.80" width="56.80" height="13.40" fill="#a0a8b2" stroke="#4a5670" stroke-width="1.2"/>
<path d="M666.24,406.60 H673.64 L669.94,412.20 Z" fill="#0b0d12"/>
<rect x="618.54" y="432.90" width="56.80" height="13.30" fill="#e8e8e8" stroke="#4a5670" stroke-width="1.2"/>
<path d="M666.24,436.65 H673.64 L669.94,442.25 Z" fill="#0b0d12"/>
<rect x="618.54" y="451.90" width="56.80" height="12.50" fill="none" stroke="#56647f" stroke-width="1.2"/>
<rect x="621.89" y="475.65" width="24.70" height="13.40" rx="7.35" fill="#e8e8e8" stroke="#47536e" stroke-width="1.3"/>
<rect x="621.87" y="506.62" width="24.75" height="13.45" fill="#e8e8e8" stroke="#505c76" stroke-width="1.25"/>
<rect x="653.24" y="474.7" width="10.7" height="128.6" fill="#8d949c"/><rect x="653.24" y="474.7" width="4.8" height="128.6" fill="#1b1e25"/><rect x="659.19" y="474.7" width="4.75" height="128.6" fill="#1b1e25"/><rect x="653.24" y="487.4" width="10.7" height="1.5" fill="#7a828c"/>
<path d="M665.44,487.9 L674.84,482.9 V492.9 Z" fill="#95a0ae" stroke="#4f5d78" stroke-width="1.1" stroke-linejoin="round"/>
<rect x="666.24" y="474.80" width="4" height="1.1" fill="#66748f"/>
<rect x="666.24" y="500.00" width="4" height="1.1" fill="#66748f"/>
<rect x="666.24" y="512.80" width="4" height="1.1" fill="#66748f"/>
<rect x="666.24" y="525.00" width="4" height="1.1" fill="#66748f"/>
<rect x="666.24" y="537.80" width="4" height="1.1" fill="#66748f"/>
<rect x="666.24" y="551.70" width="4" height="1.1" fill="#66748f"/>
<rect x="666.24" y="562.00" width="4" height="1.1" fill="#66748f"/>
<rect x="666.24" y="572.30" width="4" height="1.1" fill="#66748f"/>
<rect x="666.24" y="580.30" width="4" height="1.1" fill="#66748f"/>
<rect x="666.24" y="588.30" width="4" height="1.1" fill="#66748f"/>
<rect x="666.24" y="595.30" width="4" height="1.1" fill="#66748f"/>
<rect x="666.24" y="600.00" width="4" height="1.1" fill="#66748f"/>
<rect x="621.87" y="538.92" width="24.75" height="24.25" fill="#ecf00e" stroke="#646f7c" stroke-width="1.25"/>
<rect x="621.87" y="569.83" width="24.75" height="13.25" fill="#95a0ab" stroke="#566179" stroke-width="1.25"/>
<rect x="621.87" y="589.33" width="24.75" height="13.05" fill="#95a0ab" stroke="#566179" stroke-width="1.25"/>
<circle cx="634.24" cy="595.85" r="4.1" fill="#0b0d15"/>
<rect x="680.66" y="61.70" width="63.60" height="20.00" fill="#2cffaa"/>
<rect x="680.66" y="86.00" width="63.60" height="19.30" fill="#d9dce0"/>
<rect x="685.71" y="91.45" width="9.40" height="8.70" fill="#95a0ab" stroke="#5a667e" stroke-width="1.1"/>
<rect x="680.66" y="106.76" width="63.60" height="19.30" fill="#a9b0b8"/>
<rect x="685.71" y="112.21" width="9.40" height="8.70" fill="#95a0ab" stroke="#5a667e" stroke-width="1.1"/>
<rect x="680.66" y="127.52" width="63.60" height="19.30" fill="#a9b0b8"/>
<rect x="685.71" y="132.97" width="9.40" height="8.70" fill="#95a0ab" stroke="#5a667e" stroke-width="1.1"/>
<rect x="680.66" y="148.28" width="63.60" height="19.30" fill="#a9b0b8"/>
<rect x="685.71" y="153.73" width="9.40" height="8.70" fill="#95a0ab" stroke="#5a667e" stroke-width="1.1"/>
<rect x="680.66" y="169.04" width="63.60" height="19.30" fill="#a9b0b8"/>
<rect x="685.71" y="174.49" width="9.40" height="8.70" fill="#95a0ab" stroke="#5a667e" stroke-width="1.1"/>
<rect x="680.66" y="189.80" width="63.60" height="19.30" fill="#a9b0b8"/>
<rect x="685.71" y="195.25" width="9.40" height="8.70" fill="#95a0ab" stroke="#5a667e" stroke-width="1.1"/>
<rect x="680.66" y="210.56" width="63.60" height="19.30" fill="#a9b0b8"/>
<rect x="685.71" y="216.01" width="9.40" height="8.70" fill="#95a0ab" stroke="#5a667e" stroke-width="1.1"/>
<rect x="680.66" y="231.32" width="63.60" height="19.30" fill="#a9b0b8"/>
<rect x="685.71" y="236.77" width="9.40" height="8.70" fill="#95a0ab" stroke="#5a667e" stroke-width="1.1"/>
<rect x="680.66" y="253.00" width="63.60" height="59.70" fill="#a9b0b8"/>
<rect x="680.66" y="317.00" width="63.60" height="20.00" fill="#a9b0b8"/>
<rect x="685.71" y="322.55" width="9.40" height="8.70" fill="#95a0ab" stroke="#5a667e" stroke-width="1.1"/>
<rect x="716.16" y="319.70" width="1.30" height="14.50" fill="#0b0d15"/>
<rect x="680.66" y="339.20" width="63.60" height="128.80" fill="#a9b0b8"/>
<rect x="680.66" y="470.00" width="63.60" height="138.00" fill="#a9b0b8"/>
<rect x="684.16" y="354.80" width="56.80" height="13.40" fill="#e8e8e8" stroke="#4a5670" stroke-width="1.2"/>
<path d="M731.86,358.60 H739.26 L735.56,364.20 Z" fill="#0b0d12"/>
<rect x="684.16" y="373.10" width="56.80" height="13.30" fill="#e8e8e8" stroke="#4a5670" stroke-width="1.2"/>
<path d="M731.86,376.85 H739.26 L735.56,382.45 Z" fill="#0b0d12"/>
<rect x="684.16" y="402.80" width="56.80" height="13.40" fill="#a0a8b2" stroke="#4a5670" stroke-width="1.2"/>
<path d="M731.86,406.60 H739.26 L735.56,412.20 Z" fill="#0b0d12"/>
<rect x="684.16" y="432.90" width="56.80" height="13.30" fill="#e8e8e8" stroke="#4a5670" stroke-width="1.2"/>
<path d="M731.86,436.65 H739.26 L735.56,442.25 Z" fill="#0b0d12"/>
<rect x="684.16" y="451.90" width="56.80" height="12.50" fill="none" stroke="#56647f" stroke-width="1.2"/>
<rect x="687.51" y="475.65" width="24.70" height="13.40" rx="7.35" fill="#e8e8e8" stroke="#47536e" stroke-width="1.3"/>
<rect x="687.49" y="506.62" width="24.75" height="13.45" fill="#e8e8e8" stroke="#505c76" stroke-width="1.25"/>
<rect x="718.86" y="474.7" width="10.7" height="128.6" fill="#8d949c"/><rect x="718.86" y="474.7" width="4.8" height="128.6" fill="#1b1e25"/><rect x="724.81" y="474.7" width="4.75" height="128.6" fill="#1b1e25"/><rect x="718.86" y="487.4" width="10.7" height="1.5" fill="#7a828c"/>
<path d="M731.06,487.9 L740.46,482.9 V492.9 Z" fill="#95a0ae" stroke="#4f5d78" stroke-width="1.1" stroke-linejoin="round"/>
<rect x="731.86" y="474.80" width="4" height="1.1" fill="#66748f"/>
<rect x="731.86" y="500.00" width="4" height="1.1" fill="#66748f"/>
<rect x="731.86" y="512.80" width="4" height="1.1" fill="#66748f"/>
<rect x="731.86" y="525.00" width="4" height="1.1" fill="#66748f"/>
<rect x="731.86" y="537.80" width="4" height="1.1" fill="#66748f"/>
<rect x="731.86" y="551.70" width="4" height="1.1" fill="#66748f"/>
<rect x="731.86" y="562.00" width="4" height="1.1" fill="#66748f"/>
<rect x="731.86" y="572.30" width="4" height="1.1" fill="#66748f"/>
<rect x="731.86" y="580.30" width="4" height="1.1" fill="#66748f"/>
<rect x="731.86" y="588.30" width="4" height="1.1" fill="#66748f"/>
<rect x="731.86" y="595.30" width="4" height="1.1" fill="#66748f"/>
<rect x="731.86" y="600.00" width="4" height="1.1" fill="#66748f"/>
<rect x="687.49" y="538.92" width="24.75" height="24.25" fill="#ecf00e" stroke="#646f7c" stroke-width="1.25"/>
<rect x="687.49" y="569.83" width="24.75" height="13.25" fill="#95a0ab" stroke="#566179" stroke-width="1.25"/>
<rect x="687.49" y="589.33" width="24.75" height="13.05" fill="#95a0ab" stroke="#566179" stroke-width="1.25"/>
<circle cx="699.86" cy="595.85" r="4.1" fill="#0b0d15"/>
<rect x="746.28" y="61.70" width="63.60" height="20.00" fill="#bdfc07"/>
<rect x="746.28" y="86.00" width="63.60" height="19.30" fill="#d9dce0"/>
<rect x="751.33" y="91.45" width="9.40" height="8.70" fill="#95a0ab" stroke="#5a667e" stroke-width="1.1"/>
<rect x="746.28" y="106.76" width="63.60" height="19.30" fill="#a9b0b8"/>
<rect x="751.33" y="112.21" width="9.40" height="8.70" fill="#95a0ab" stroke="#5a667e" stroke-width="1.1"/>
<rect x="746.28" y="127.52" width="63.60" height="19.30" fill="#a9b0b8"/>
<rect x="751.33" y="132.97" width="9.40" height="8.70" fill="#95a0ab" stroke="#5a667e" stroke-width="1.1"/>
<rect x="746.28" y="148.28" width="63.60" height="19.30" fill="#a9b0b8"/>
<rect x="751.33" y="153.73" width="9.40" height="8.70" fill="#95a0ab" stroke="#5a667e" stroke-width="1.1"/>
<rect x="746.28" y="169.04" width="63.60" height="19.30" fill="#a9b0b8"/>
<rect x="751.33" y="174.49" width="9.40" height="8.70" fill="#95a0ab" stroke="#5a667e" stroke-width="1.1"/>
<rect x="746.28" y="189.80" width="63.60" height="19.30" fill="#a9b0b8"/>
<rect x="751.33" y="195.25" width="9.40" height="8.70" fill="#95a0ab" stroke="#5a667e" stroke-width="1.1"/>
<rect x="746.28" y="210.56" width="63.60" height="19.30" fill="#a9b0b8"/>
<rect x="751.33" y="216.01" width="9.40" height="8.70" fill="#95a0ab" stroke="#5a667e" stroke-width="1.1"/>
<rect x="746.28" y="231.32" width="63.60" height="19.30" fill="#a9b0b8"/>
<rect x="751.33" y="236.77" width="9.40" height="8.70" fill="#95a0ab" stroke="#5a667e" stroke-width="1.1"/>
<rect x="746.28" y="253.00" width="63.60" height="59.70" fill="#a9b0b8"/>
<rect x="746.28" y="317.00" width="63.60" height="20.00" fill="#a9b0b8"/>
<rect x="751.33" y="322.55" width="9.40" height="8.70" fill="#95a0ab" stroke="#5a667e" stroke-width="1.1"/>
<rect x="781.78" y="319.70" width="1.30" height="14.50" fill="#0b0d15"/>
<rect x="746.28" y="339.20" width="63.60" height="128.80" fill="#a9b0b8"/>
<rect x="746.28" y="470.00" width="63.60" height="138.00" fill="#a9b0b8"/>
<rect x="749.78" y="354.80" width="56.80" height="13.40" fill="#e8e8e8" stroke="#4a5670" stroke-width="1.2"/>
<path d="M797.48,358.60 H804.88 L801.18,364.20 Z" fill="#0b0d12"/>
<rect x="749.78" y="373.10" width="56.80" height="13.30" fill="#e8e8e8" stroke="#4a5670" stroke-width="1.2"/>
<path d="M797.48,376.85 H804.88 L801.18,382.45 Z" fill="#0b0d12"/>
<rect x="749.78" y="402.80" width="56.80" height="13.40" fill="#a0a8b2" stroke="#4a5670" stroke-width="1.2"/>
<path d="M797.48,406.60 H804.88 L801.18,412.20 Z" fill="#0b0d12"/>
<rect x="749.78" y="432.90" width="56.80" height="13.30" fill="#e8e8e8" stroke="#4a5670" stroke-width="1.2"/>
<path d="M797.48,436.65 H804.88 L801.18,442.25 Z" fill="#0b0d12"/>
<rect x="749.78" y="451.90" width="56.80" height="12.50" fill="none" stroke="#56647f" stroke-width="1.2"/>
<rect x="753.13" y="475.65" width="24.70" height="13.40" rx="7.35" fill="#e8e8e8" stroke="#47536e" stroke-width="1.3"/>
<rect x="753.11" y="506.62" width="24.75" height="13.45" fill="#e8e8e8" stroke="#505c76" stroke-width="1.25"/>
<rect x="784.48" y="474.7" width="10.7" height="128.6" fill="#8d949c"/><rect x="784.48" y="474.7" width="4.8" height="128.6" fill="#1b1e25"/><rect x="790.43" y="474.7" width="4.75" height="128.6" fill="#1b1e25"/><rect x="784.48" y="487.4" width="10.7" height="1.5" fill="#7a828c"/>
<path d="M796.68,487.9 L806.08,482.9 V492.9 Z" fill="#95a0ae" stroke="#4f5d78" stroke-width="1.1" stroke-linejoin="round"/>
<rect x="797.48" y="474.80" width="4" height="1.1" fill="#66748f"/>
<rect x="797.48" y="500.00" width="4" height="1.1" fill="#66748f"/>
<rect x="797.48" y="512.80" width="4" height="1.1" fill="#66748f"/>
<rect x="797.48" y="525.00" width="4" height="1.1" fill="#66748f"/>
<rect x="797.48" y="537.80" width="4" height="1.1" fill="#66748f"/>
<rect x="797.48" y="551.70" width="4" height="1.1" fill="#66748f"/>
<rect x="797.48" y="562.00" width="4" height="1.1" fill="#66748f"/>
<rect x="797.48" y="572.30" width="4" height="1.1" fill="#66748f"/>
<rect x="797.48" y="580.30" width="4" height="1.1" fill="#66748f"/>
<rect x="797.48" y="588.30" width="4" height="1.1" fill="#66748f"/>
<rect x="797.48" y="595.30" width="4" height="1.1" fill="#66748f"/>
<rect x="797.48" y="600.00" width="4" height="1.1" fill="#66748f"/>
<rect x="753.11" y="538.92" width="24.75" height="24.25" fill="#ecf00e" stroke="#646f7c" stroke-width="1.25"/>
<rect x="753.11" y="569.83" width="24.75" height="13.25" fill="#95a0ab" stroke="#566179" stroke-width="1.25"/>
<rect x="753.11" y="589.33" width="24.75" height="13.05" fill="#95a0ab" stroke="#566179" stroke-width="1.25"/>
<circle cx="765.48" cy="595.85" r="4.1" fill="#0b0d15"/>
<rect x="811.90" y="61.70" width="63.60" height="20.00" fill="#ffee33"/>
<rect x="811.90" y="86.00" width="63.60" height="19.30" fill="#d9dce0"/>
<rect x="816.95" y="91.45" width="9.40" height="8.70" fill="#95a0ab" stroke="#5a667e" stroke-width="1.1"/>
<rect x="811.90" y="106.76" width="63.60" height="19.30" fill="#a9b0b8"/>
<rect x="816.95" y="112.21" width="9.40" height="8.70" fill="#95a0ab" stroke="#5a667e" stroke-width="1.1"/>
<rect x="811.90" y="127.52" width="63.60" height="19.30" fill="#a9b0b8"/>
<rect x="816.95" y="132.97" width="9.40" height="8.70" fill="#95a0ab" stroke="#5a667e" stroke-width="1.1"/>
<rect x="811.90" y="148.28" width="63.60" height="19.30" fill="#a9b0b8"/>
<rect x="816.95" y="153.73" width="9.40" height="8.70" fill="#95a0ab" stroke="#5a667e" stroke-width="1.1"/>
<rect x="811.90" y="169.04" width="63.60" height="19.30" fill="#a9b0b8"/>
<rect x="816.95" y="174.49" width="9.40" height="8.70" fill="#95a0ab" stroke="#5a667e" stroke-width="1.1"/>
<rect x="811.90" y="189.80" width="63.60" height="19.30" fill="#a9b0b8"/>
<rect x="816.95" y="195.25" width="9.40" height="8.70" fill="#95a0ab" stroke="#5a667e" stroke-width="1.1"/>
<rect x="811.90" y="210.56" width="63.60" height="19.30" fill="#a9b0b8"/>
<rect x="816.95" y="216.01" width="9.40" height="8.70" fill="#95a0ab" stroke="#5a667e" stroke-width="1.1"/>
<rect x="811.90" y="231.32" width="63.60" height="19.30" fill="#a9b0b8"/>
<rect x="816.95" y="236.77" width="9.40" height="8.70" fill="#95a0ab" stroke="#5a667e" stroke-width="1.1"/>
<rect x="811.90" y="253.00" width="63.60" height="59.70" fill="#a9b0b8"/>
<rect x="811.90" y="317.00" width="63.60" height="20.00" fill="#a9b0b8"/>
<rect x="816.95" y="322.55" width="9.40" height="8.70" fill="#95a0ab" stroke="#5a667e" stroke-width="1.1"/>
<rect x="847.40" y="319.70" width="1.30" height="14.50" fill="#0b0d15"/>
<rect x="811.90" y="339.20" width="63.60" height="128.80" fill="#a9b0b8"/>
<rect x="811.90" y="470.00" width="63.60" height="138.00" fill="#a9b0b8"/>
<rect x="815.40" y="354.80" width="56.80" height="13.40" fill="#e8e8e8" stroke="#4a5670" stroke-width="1.2"/>
<path d="M863.10,358.60 H870.50 L866.80,364.20 Z" fill="#0b0d12"/>
<rect x="815.40" y="373.10" width="56.80" height="13.30" fill="#e8e8e8" stroke="#4a5670" stroke-width="1.2"/>
<path d="M863.10,376.85 H870.50 L866.80,382.45 Z" fill="#0b0d12"/>
<rect x="815.40" y="402.80" width="56.80" height="13.40" fill="#a0a8b2" stroke="#4a5670" stroke-width="1.2"/>
<path d="M863.10,406.60 H870.50 L866.80,412.20 Z" fill="#0b0d12"/>
<rect x="815.40" y="432.90" width="56.80" height="13.30" fill="#e8e8e8" stroke="#4a5670" stroke-width="1.2"/>
<path d="M863.10,436.65 H870.50 L866.80,442.25 Z" fill="#0b0d12"/>
<rect x="815.40" y="451.90" width="56.80" height="12.50" fill="none" stroke="#56647f" stroke-width="1.2"/>
<rect x="818.75" y="475.65" width="24.70" height="13.40" rx="7.35" fill="#e8e8e8" stroke="#47536e" stroke-width="1.3"/>
<rect x="818.73" y="506.62" width="24.75" height="13.45" fill="#e8e8e8" stroke="#505c76" stroke-width="1.25"/>
<rect x="850.10" y="474.7" width="10.7" height="128.6" fill="#8d949c"/><rect x="850.10" y="474.7" width="4.8" height="128.6" fill="#1b1e25"/><rect x="856.05" y="474.7" width="4.75" height="128.6" fill="#1b1e25"/><rect x="850.10" y="487.4" width="10.7" height="1.5" fill="#7a828c"/>
<path d="M862.30,487.9 L871.70,482.9 V492.9 Z" fill="#95a0ae" stroke="#4f5d78" stroke-width="1.1" stroke-linejoin="round"/>
<rect x="863.10" y="474.80" width="4" height="1.1" fill="#66748f"/>
<rect x="863.10" y="500.00" width="4" height="1.1" fill="#66748f"/>
<rect x="863.10" y="512.80" width="4" height="1.1" fill="#66748f"/>
<rect x="863.10" y="525.00" width="4" height="1.1" fill="#66748f"/>
<rect x="863.10" y="537.80" width="4" height="1.1" fill="#66748f"/>
<rect x="863.10" y="551.70" width="4" height="1.1" fill="#66748f"/>
<rect x="863.10" y="562.00" width="4" height="1.1" fill="#66748f"/>
<rect x="863.10" y="572.30" width="4" height="1.1" fill="#66748f"/>
<rect x="863.10" y="580.30" width="4" height="1.1" fill="#66748f"/>
<rect x="863.10" y="588.30" width="4" height="1.1" fill="#66748f"/>
<rect x="863.10" y="595.30" width="4" height="1.1" fill="#66748f"/>
<rect x="863.10" y="600.00" width="4" height="1.1" fill="#66748f"/>
<rect x="818.73" y="538.92" width="24.75" height="24.25" fill="#ecf00e" stroke="#646f7c" stroke-width="1.25"/>
<rect x="818.73" y="569.83" width="24.75" height="13.25" fill="#95a0ab" stroke="#566179" stroke-width="1.25"/>
<rect x="818.73" y="589.33" width="24.75" height="13.05" fill="#95a0ab" stroke="#566179" stroke-width="1.25"/>
<circle cx="831.10" cy="595.85" r="4.1" fill="#0b0d15"/>
<rect x="877.52" y="61.70" width="63.60" height="20.00" fill="#bd9a5f"/>
<rect x="877.52" y="86.00" width="63.60" height="19.30" fill="#d9dce0"/>
<rect x="882.57" y="91.45" width="9.40" height="8.70" fill="#95a0ab" stroke="#5a667e" stroke-width="1.1"/>
<rect x="877.52" y="106.76" width="63.60" height="19.30" fill="#a9b0b8"/>
<rect x="882.57" y="112.21" width="9.40" height="8.70" fill="#95a0ab" stroke="#5a667e" stroke-width="1.1"/>
<rect x="877.52" y="127.52" width="63.60" height="19.30" fill="#a9b0b8"/>
<rect x="882.57" y="132.97" width="9.40" height="8.70" fill="#95a0ab" stroke="#5a667e" stroke-width="1.1"/>
<rect x="877.52" y="148.28" width="63.60" height="19.30" fill="#a9b0b8"/>
<rect x="882.57" y="153.73" width="9.40" height="8.70" fill="#95a0ab" stroke="#5a667e" stroke-width="1.1"/>
<rect x="877.52" y="169.04" width="63.60" height="19.30" fill="#a9b0b8"/>
<rect x="882.57" y="174.49" width="9.40" height="8.70" fill="#95a0ab" stroke="#5a667e" stroke-width="1.1"/>
<rect x="877.52" y="189.80" width="63.60" height="19.30" fill="#a9b0b8"/>
<rect x="882.57" y="195.25" width="9.40" height="8.70" fill="#95a0ab" stroke="#5a667e" stroke-width="1.1"/>
<rect x="877.52" y="210.56" width="63.60" height="19.30" fill="#a9b0b8"/>
<rect x="882.57" y="216.01" width="9.40" height="8.70" fill="#95a0ab" stroke="#5a667e" stroke-width="1.1"/>
<rect x="877.52" y="231.32" width="63.60" height="19.30" fill="#a9b0b8"/>
<rect x="882.57" y="236.77" width="9.40" height="8.70" fill="#95a0ab" stroke="#5a667e" stroke-width="1.1"/>
<rect x="877.52" y="253.00" width="63.60" height="59.70" fill="#a9b0b8"/>
<rect x="877.52" y="317.00" width="63.60" height="20.00" fill="#a9b0b8"/>
<rect x="882.57" y="322.55" width="9.40" height="8.70" fill="#95a0ab" stroke="#5a667e" stroke-width="1.1"/>
<rect x="913.02" y="319.70" width="1.30" height="14.50" fill="#0b0d15"/>
<rect x="877.52" y="339.20" width="63.60" height="128.80" fill="#a9b0b8"/>
<rect x="877.52" y="470.00" width="63.60" height="138.00" fill="#a9b0b8"/>
<rect x="881.02" y="354.80" width="56.80" height="13.40" fill="#e8e8e8" stroke="#4a5670" stroke-width="1.2"/>
<path d="M928.72,358.60 H936.12 L932.42,364.20 Z" fill="#0b0d12"/>
<rect x="881.02" y="373.10" width="56.80" height="13.30" fill="#e8e8e8" stroke="#4a5670" stroke-width="1.2"/>
<path d="M928.72,376.85 H936.12 L932.42,382.45 Z" fill="#0b0d12"/>
<rect x="881.02" y="402.80" width="56.80" height="13.40" fill="#a0a8b2" stroke="#4a5670" stroke-width="1.2"/>
<path d="M928.72,406.60 H936.12 L932.42,412.20 Z" fill="#0b0d12"/>
<rect x="881.02" y="432.90" width="56.80" height="13.30" fill="#e8e8e8" stroke="#4a5670" stroke-width="1.2"/>
<path d="M928.72,436.65 H936.12 L932.42,442.25 Z" fill="#0b0d12"/>
<rect x="881.02" y="451.90" width="56.80" height="12.50" fill="none" stroke="#56647f" stroke-width="1.2"/>
<rect x="884.37" y="475.65" width="24.70" height="13.40" rx="7.35" fill="#e8e8e8" stroke="#47536e" stroke-width="1.3"/>
<rect x="884.35" y="506.62" width="24.75" height="13.45" fill="#e8e8e8" stroke="#505c76" stroke-width="1.25"/>
<rect x="915.72" y="474.7" width="10.7" height="128.6" fill="#8d949c"/><rect x="915.72" y="474.7" width="4.8" height="128.6" fill="#1b1e25"/><rect x="921.67" y="474.7" width="4.75" height="128.6" fill="#1b1e25"/><rect x="915.72" y="487.4" width="10.7" height="1.5" fill="#7a828c"/>
<path d="M927.92,487.9 L937.32,482.9 V492.9 Z" fill="#95a0ae" stroke="#4f5d78" stroke-width="1.1" stroke-linejoin="round"/>
<rect x="928.72" y="474.80" width="4" height="1.1" fill="#66748f"/>
<rect x="928.72" y="500.00" width="4" height="1.1" fill="#66748f"/>
<rect x="928.72" y="512.80" width="4" height="1.1" fill="#66748f"/>
<rect x="928.72" y="525.00" width="4" height="1.1" fill="#66748f"/>
<rect x="928.72" y="537.80" width="4" height="1.1" fill="#66748f"/>
<rect x="928.72" y="551.70" width="4" height="1.1" fill="#66748f"/>
<rect x="928.72" y="562.00" width="4" height="1.1" fill="#66748f"/>
<rect x="928.72" y="572.30" width="4" height="1.1" fill="#66748f"/>
<rect x="928.72" y="580.30" width="4" height="1.1" fill="#66748f"/>
<rect x="928.72" y="588.30" width="4" height="1.1" fill="#66748f"/>
<rect x="928.72" y="595.30" width="4" height="1.1" fill="#66748f"/>
<rect x="928.72" y="600.00" width="4" height="1.1" fill="#66748f"/>
<rect x="884.35" y="538.92" width="24.75" height="24.25" fill="#ecf00e" stroke="#646f7c" stroke-width="1.25"/>
<rect x="884.35" y="569.83" width="24.75" height="13.25" fill="#95a0ab" stroke="#566179" stroke-width="1.25"/>
<rect x="884.35" y="589.33" width="24.75" height="13.05" fill="#95a0ab" stroke="#566179" stroke-width="1.25"/>
<circle cx="896.72" cy="595.85" r="4.1" fill="#0b0d15"/>
<rect x="943.14" y="61.70" width="63.60" height="20.00" fill="#b53a65"/>
<rect x="943.14" y="86.00" width="63.60" height="19.30" fill="#d9dce0"/>
<rect x="948.19" y="91.45" width="9.40" height="8.70" fill="#95a0ab" stroke="#5a667e" stroke-width="1.1"/>
<rect x="943.14" y="106.76" width="63.60" height="19.30" fill="#a9b0b8"/>
<rect x="948.19" y="112.21" width="9.40" height="8.70" fill="#95a0ab" stroke="#5a667e" stroke-width="1.1"/>
<rect x="943.14" y="127.52" width="63.60" height="19.30" fill="#a9b0b8"/>
<rect x="948.19" y="132.97" width="9.40" height="8.70" fill="#95a0ab" stroke="#5a667e" stroke-width="1.1"/>
<rect x="943.14" y="148.28" width="63.60" height="19.30" fill="#a9b0b8"/>
<rect x="948.19" y="153.73" width="9.40" height="8.70" fill="#95a0ab" stroke="#5a667e" stroke-width="1.1"/>
<rect x="943.14" y="169.04" width="63.60" height="19.30" fill="#a9b0b8"/>
<rect x="948.19" y="174.49" width="9.40" height="8.70" fill="#95a0ab" stroke="#5a667e" stroke-width="1.1"/>
<rect x="943.14" y="189.80" width="63.60" height="19.30" fill="#a9b0b8"/>
<rect x="948.19" y="195.25" width="9.40" height="8.70" fill="#95a0ab" stroke="#5a667e" stroke-width="1.1"/>
<rect x="943.14" y="210.56" width="63.60" height="19.30" fill="#a9b0b8"/>
<rect x="948.19" y="216.01" width="9.40" height="8.70" fill="#95a0ab" stroke="#5a667e" stroke-width="1.1"/>
<rect x="943.14" y="231.32" width="63.60" height="19.30" fill="#a9b0b8"/>
<rect x="948.19" y="236.77" width="9.40" height="8.70" fill="#95a0ab" stroke="#5a667e" stroke-width="1.1"/>
<rect x="943.14" y="253.00" width="63.60" height="59.70" fill="#a9b0b8"/>
<rect x="943.14" y="317.00" width="63.60" height="20.00" fill="#a9b0b8"/>
<rect x="948.19" y="322.55" width="9.40" height="8.70" fill="#95a0ab" stroke="#5a667e" stroke-width="1.1"/>
<rect x="978.64" y="319.70" width="1.30" height="14.50" fill="#0b0d15"/>
<rect x="943.14" y="339.20" width="63.60" height="128.80" fill="#a9b0b8"/>
<rect x="943.14" y="470.00" width="63.60" height="138.00" fill="#a9b0b8"/>
<rect x="946.64" y="354.80" width="56.80" height="13.40" fill="#e8e8e8" stroke="#4a5670" stroke-width="1.2"/>
<path d="M994.34,358.60 H1001.74 L998.04,364.20 Z" fill="#0b0d12"/>
<rect x="946.64" y="373.10" width="56.80" height="13.30" fill="#e8e8e8" stroke="#4a5670" stroke-width="1.2"/>
<path d="M994.34,376.85 H1001.74 L998.04,382.45 Z" fill="#0b0d12"/>
<rect x="948.64" y="374.90" width="3" height="2.7" rx=".8" fill="#11131a"/>
<rect x="948.64" y="378.20" width="3" height="2.7" rx=".8" fill="#11131a"/>
<rect x="948.64" y="381.50" width="3" height="2.7" rx=".8" fill="#11131a"/>
<rect x="946.64" y="402.80" width="56.80" height="13.40" fill="#e8e8e8" stroke="#4a5670" stroke-width="1.2"/>
<path d="M994.34,406.60 H1001.74 L998.04,412.20 Z" fill="#0b0d12"/>
<rect x="946.64" y="432.90" width="56.80" height="13.30" fill="#e8e8e8" stroke="#4a5670" stroke-width="1.2"/>
<path d="M994.34,436.65 H1001.74 L998.04,442.25 Z" fill="#0b0d12"/>
<rect x="946.64" y="451.90" width="56.80" height="12.50" fill="none" stroke="#56647f" stroke-width="1.2"/>
<circle cx="991.14" cy="476.70" r="3.3" fill="#20232b"/>
<circle cx="991.14" cy="485.93" r="3.3" fill="#20232b"/>
<circle cx="991.14" cy="495.16" r="3.3" fill="#20232b"/>
<circle cx="991.14" cy="504.39" r="3.3" fill="#20232b"/>
<circle cx="991.14" cy="513.62" r="3.3" fill="#20232b"/>
<circle cx="991.14" cy="522.85" r="3.3" fill="#20232b"/>
<circle cx="991.14" cy="532.08" r="3.3" fill="#20232b"/>
<circle cx="991.14" cy="541.31" r="3.3" fill="#20232b"/>
<circle cx="991.14" cy="550.54" r="3.3" fill="#20232b"/>
<circle cx="991.14" cy="559.77" r="3.3" fill="#20232b"/>
<circle cx="991.14" cy="569.00" r="3.3" fill="#20232b"/>
<circle cx="991.14" cy="578.23" r="3.3" fill="#20232b"/>
<circle cx="991.14" cy="587.46" r="3.3" fill="#20232b"/>
<circle cx="991.14" cy="596.69" r="3.3" fill="#20232b"/>
<rect x="949.97" y="538.92" width="24.75" height="24.25" fill="#ecf00e" stroke="#646f7c" stroke-width="1.25"/>
<rect x="949.97" y="569.83" width="24.75" height="13.25" fill="#95a0ab" stroke="#566179" stroke-width="1.25"/>
<rect x="949.97" y="589.33" width="24.75" height="13.05" fill="#95a0ab" stroke="#566179" stroke-width="1.25"/>
<circle cx="962.34" cy="595.85" r="4.2" fill="#0b0d15"/><ellipse cx="961.84" cy="597.25" rx="1.5" ry="1.1" fill="#95a0ab"/><path d="M963.14,597.25 V593.0500000000001 h1.3" stroke="#95a0ab" stroke-width=".9" fill="none"/>
<rect x="1008.76" y="61.70" width="63.60" height="20.00" fill="#5480e4"/>
<rect x="1008.76" y="86.00" width="63.60" height="19.30" fill="#f7d00c"/>
<circle cx="1018.46" cy="95.70" r="4.9" fill="#95a0ab" stroke="#525d70" stroke-width="1.1"/>
<rect x="1008.76" y="106.76" width="63.60" height="19.30" fill="#d9dce0"/>
<circle cx="1018.46" cy="116.46" r="4.9" fill="#95a0ab" stroke="#525d70" stroke-width="1.1"/>
<rect x="1008.76" y="127.52" width="63.60" height="19.30" fill="#d9dce0"/>
<circle cx="1018.46" cy="137.22" r="4.9" fill="#95a0ab" stroke="#525d70" stroke-width="1.1"/>
<rect x="1008.76" y="148.28" width="63.60" height="19.30" fill="#d9dce0"/>
<circle cx="1018.46" cy="157.98" r="4.9" fill="#95a0ab" stroke="#525d70" stroke-width="1.1"/>
<rect x="1008.76" y="169.04" width="63.60" height="19.30" fill="#d9dce0"/>
<circle cx="1018.46" cy="178.74" r="4.9" fill="#95a0ab" stroke="#525d70" stroke-width="1.1"/>
<rect x="1008.76" y="189.80" width="63.60" height="19.30" fill="#d9dce0"/>
<circle cx="1018.46" cy="199.50" r="4.9" fill="#95a0ab" stroke="#525d70" stroke-width="1.1"/>
<rect x="1008.76" y="210.56" width="63.60" height="19.30" fill="#d9dce0"/>
<circle cx="1018.46" cy="220.26" r="4.9" fill="#95a0ab" stroke="#525d70" stroke-width="1.1"/>
<rect x="1008.76" y="231.32" width="63.60" height="19.30" fill="#d9dce0"/>
<circle cx="1018.46" cy="241.02" r="4.9" fill="#95a0ab" stroke="#525d70" stroke-width="1.1"/>
<rect x="1008.76" y="253.00" width="63.60" height="59.70" fill="#d9dce0"/>
<rect x="1008.76" y="317.00" width="63.60" height="20.00" fill="#a9b0b8"/>
<rect x="1013.81" y="322.55" width="9.40" height="8.70" fill="#95a0ab" stroke="#5a667e" stroke-width="1.1"/>
<rect x="1044.26" y="319.70" width="1.30" height="14.50" fill="#0b0d15"/>
<rect x="1008.76" y="339.20" width="63.60" height="128.80" fill="#d9dce0"/>
<rect x="1008.76" y="470.00" width="63.60" height="138.00" fill="#d9dce0"/>
<rect x="1012.26" y="354.80" width="56.80" height="13.40" fill="#e8e8e8" stroke="#4a5670" stroke-width="1.2"/>
<path d="M1059.96,358.60 H1067.36 L1063.66,364.20 Z" fill="#0b0d12"/>
<rect x="1012.26" y="373.10" width="56.80" height="13.30" fill="#e8e8e8" stroke="#4a5670" stroke-width="1.2"/>
<path d="M1059.96,376.85 H1067.36 L1063.66,382.45 Z" fill="#0b0d12"/>
<rect x="1014.26" y="374.90" width="3" height="2.7" rx=".8" fill="#11131a"/>
<rect x="1014.26" y="378.20" width="3" height="2.7" rx=".8" fill="#11131a"/>
<rect x="1014.26" y="381.50" width="3" height="2.7" rx=".8" fill="#11131a"/>
<rect x="1012.26" y="402.80" width="56.80" height="13.40" fill="#e8e8e8" stroke="#4a5670" stroke-width="1.2"/>
<path d="M1059.96,406.60 H1067.36 L1063.66,412.20 Z" fill="#0b0d12"/>
<rect x="1012.26" y="432.90" width="56.80" height="13.30" fill="#e8e8e8" stroke="#4a5670" stroke-width="1.2"/>
<path d="M1059.96,436.65 H1067.36 L1063.66,442.25 Z" fill="#0b0d12"/>
<rect x="1012.26" y="451.90" width="56.80" height="12.50" fill="none" stroke="#56647f" stroke-width="1.2"/>
<rect x="1015.61" y="475.65" width="24.70" height="13.40" rx="7.35" fill="#e8e8e8" stroke="#47536e" stroke-width="1.3"/>
<rect x="1015.59" y="506.62" width="24.75" height="13.45" fill="#e8e8e8" stroke="#505c76" stroke-width="1.25"/>
<rect x="1046.96" y="474.7" width="10.7" height="128.6" fill="#8d949c"/><rect x="1046.96" y="474.7" width="4.8" height="128.6" fill="#1b1e25"/><rect x="1052.91" y="474.7" width="4.75" height="128.6" fill="#1b1e25"/><rect x="1046.96" y="487.4" width="10.7" height="1.5" fill="#7a828c"/>
<path d="M1059.16,487.9 L1068.56,482.9 V492.9 Z" fill="#95a0ae" stroke="#4f5d78" stroke-width="1.1" stroke-linejoin="round"/>
<rect x="1059.96" y="474.80" width="4" height="1.1" fill="#66748f"/>
<rect x="1059.96" y="500.00" width="4" height="1.1" fill="#66748f"/>
<rect x="1059.96" y="512.80" width="4" height="1.1" fill="#66748f"/>
<rect x="1059.96" y="525.00" width="4" height="1.1" fill="#66748f"/>
<rect x="1059.96" y="537.80" width="4" height="1.1" fill="#66748f"/>
<rect x="1059.96" y="551.70" width="4" height="1.1" fill="#66748f"/>
<rect x="1059.96" y="562.00" width="4" height="1.1" fill="#66748f"/>
<rect x="1059.96" y="572.30" width="4" height="1.1" fill="#66748f"/>
<rect x="1059.96" y="580.30" width="4" height="1.1" fill="#66748f"/>
<rect x="1059.96" y="588.30" width="4" height="1.1" fill="#66748f"/>
<rect x="1059.96" y="595.30" width="4" height="1.1" fill="#66748f"/>
<rect x="1059.96" y="600.00" width="4" height="1.1" fill="#66748f"/>
<rect x="1015.59" y="538.92" width="24.75" height="24.25" fill="#ecf00e" stroke="#646f7c" stroke-width="1.25"/>
<rect x="1015.59" y="569.83" width="24.75" height="13.25" fill="#95a0ab" stroke="#566179" stroke-width="1.25"/>
<rect x="1015.59" y="589.33" width="24.75" height="13.05" fill="#ff3020" stroke="#566179" stroke-width="1.25"/>
<circle cx="1027.96" cy="595.85" r="4.2" fill="#0b0d15"/><ellipse cx="1027.46" cy="597.25" rx="1.5" ry="1.1" fill="#ff3020"/><path d="M1028.76,597.25 V593.0500000000001 h1.3" stroke="#ff3020" stroke-width=".9" fill="none"/>
<rect x="1075.00" y="61.70" width="164.30" height="20.00" fill="#a9b0b8"/>
<rect x="1075.00" y="86.00" width="164.30" height="20.00" fill="#d9dce0"/>
<rect x="1075.00" y="106.00" width="164.30" height="144.60" fill="#a9b0b8"/>
<rect x="1075.00" y="253.00" width="164.30" height="59.70" fill="#a9b0b8"/>
<rect x="1075.00" y="317.00" width="164.30" height="291.00" fill="#a9b0b8"/>
<rect x="1242.00" y="61.70" width="151.30" height="20.00" fill="#ccb7e2"/>
<rect x="1242.00" y="86.00" width="151.30" height="19.30" fill="#d9dce0"/>
<path d="M1247.60,91.40 L1256.30,95.80 L1247.60,100.20 Z" fill="#95a0ad" stroke="#46536b" stroke-width="1.25" stroke-linejoin="round"/>
<rect x="1242.00" y="106.76" width="151.30" height="19.30" fill="#a9b0b8"/>
<path d="M1247.60,112.16 L1256.30,116.56 L1247.60,120.96 Z" fill="#95a0ad" stroke="#46536b" stroke-width="1.25" stroke-linejoin="round"/>
<rect x="1242.00" y="127.52" width="151.30" height="19.30" fill="#a9b0b8"/>
<path d="M1247.60,132.92 L1256.30,137.32 L1247.60,141.72 Z" fill="#95a0ad" stroke="#46536b" stroke-width="1.25" stroke-linejoin="round"/>
<rect x="1242.00" y="148.28" width="151.30" height="19.30" fill="#a9b0b8"/>
<path d="M1247.60,153.68 L1256.30,158.08 L1247.60,162.48 Z" fill="#95a0ad" stroke="#46536b" stroke-width="1.25" stroke-linejoin="round"/>
<rect x="1242.00" y="169.04" width="151.30" height="19.30" fill="#a9b0b8"/>
<path d="M1247.60,174.44 L1256.30,178.84 L1247.60,183.24 Z" fill="#95a0ad" stroke="#46536b" stroke-width="1.25" stroke-linejoin="round"/>
<rect x="1242.00" y="189.80" width="151.30" height="19.30" fill="#a9b0b8"/>
<path d="M1247.60,195.20 L1256.30,199.60 L1247.60,204.00 Z" fill="#95a0ad" stroke="#46536b" stroke-width="1.25" stroke-linejoin="round"/>
<rect x="1242.00" y="210.56" width="151.30" height="19.30" fill="#a9b0b8"/>
<path d="M1247.60,215.96 L1256.30,220.36 L1247.60,224.76 Z" fill="#95a0ad" stroke="#46536b" stroke-width="1.25" stroke-linejoin="round"/>
<rect x="1242.00" y="231.32" width="151.30" height="19.30" fill="#a9b0b8"/>
<path d="M1247.60,236.72 L1256.30,241.12 L1247.60,245.52 Z" fill="#95a0ad" stroke="#46536b" stroke-width="1.25" stroke-linejoin="round"/>
<rect x="1242.00" y="253.00" width="151.30" height="59.70" fill="#a9b0b8"/>
<rect x="1242.00" y="317.00" width="151.30" height="20.00" fill="#a9b0b8"/>
<rect x="1247.15" y="322.55" width="9.40" height="8.70" fill="#95a0ab" stroke="#5a667e" stroke-width="1.1"/>
<rect x="1368.50" y="320.50" width="21.00" height="12.70" fill="#f27d0e" stroke="#4c5468" stroke-width="1"/>
<path d="M1371.3,322.4 L1378.4,326.8 L1371.3,331.2 Z" fill="#0b0d15"/><path d="M1379.6,324.2 h6.4 M1379.6,326.8 h6.4 M1379.6,329.4 h6.4" stroke="#3a2408" stroke-width="1.3"/>
<rect x="1242.00" y="339.20" width="151.30" height="128.80" fill="#a9b0b8"/>
<rect x="1242.00" y="470.00" width="151.30" height="138.00" fill="#a9b0b8"/>
<rect x="1245.30" y="416.40" width="144.10" height="12.80" fill="#e8e8e8" stroke="#4a5670" stroke-width="1.2"/>
<path d="M1380.30,419.90 H1387.70 L1384.00,425.50 Z" fill="#0b0d12"/>
<rect x="1246.90" y="419.80" width="1.8" height="7.6" fill="#11131a"/><rect x="1250.10" y="419.80" width="1.8" height="7.6" fill="#11131a"/><rect x="1246.90" y="417.40" width="1.8" height="1.6" fill="#11131a"/><rect x="1250.10" y="417.40" width="1.8" height="1.6" fill="#11131a"/>
<rect x="1245.30" y="452.10" width="144.10" height="12.80" fill="#e8e8e8" stroke="#4a5670" stroke-width="1.2"/>
<path d="M1380.30,455.60 H1387.70 L1384.00,461.20 Z" fill="#0b0d12"/>
<rect x="1246.90" y="455.50" width="1.8" height="7.6" fill="#11131a"/><rect x="1250.10" y="455.50" width="1.8" height="7.6" fill="#11131a"/><rect x="1246.90" y="453.10" width="1.8" height="1.6" fill="#11131a"/><rect x="1250.10" y="453.10" width="1.8" height="1.6" fill="#11131a"/>
<rect x="1278.65" y="475.65" width="38.20" height="13.40" rx="7.35" fill="#e8e8e8" stroke="#47536e" stroke-width="1.3"/>
<path d="M1293.2,495.2 H1302.8 L1298,501.3 Z" fill="#9aa5b3" stroke="#55668a" stroke-width="1"/>
<path d="M1289.2,528.6 A13.2,13.2 0 1 1 1306.8,528.6" fill="none" stroke="#191c24" stroke-width="2.3"/><path d="M1298,503.8 V518.3" stroke="#191c24" stroke-width="2.3"/>
<rect x="1285.62" y="550.33" width="25.45" height="13.05" fill="#d5d9e0" stroke="#4f5d78" stroke-width="1.25"/>
<path d="M1289.2,594.8 A13.4,13.4 0 1 1 1309.6,590.9" fill="none" stroke="#2f9bf0" stroke-width="2.2"/><path d="M1299.2,582.5 L1305.3,596.3" stroke="#11131a" stroke-width="2.2"/>
<path d="M1294.3,598.2 v-1.4 a3.2,3.2 0 0 1 6.4,0 v1.4" fill="none" stroke="#11131a" stroke-width="1.7"/><rect x="1293.3" y="596.4" width="2.4" height="3.6" rx="1" fill="#11131a"/><rect x="1299.3" y="596.4" width="2.4" height="3.6" rx="1" fill="#11131a"/>
<rect x="1326.7" y="474.7" width="13.3" height="128.6" fill="#8d949c"/><rect x="1326.7" y="474.7" width="6" height="128.6" fill="#1b1e25"/><rect x="1334.0" y="474.7" width="6" height="128.6" fill="#1b1e25"/><rect x="1326.7" y="487.6" width="13.3" height="1.3" fill="#7a828c"/>
<path d="M1342.2,491.4 L1352.6,486.2 V496.6 Z" fill="#95a0ae" stroke="#4f5d78" stroke-width="1.1" stroke-linejoin="round"/>
<rect x="1342.2" y="474.80" width="5" height="1.1" fill="#66748f"/>
<rect x="1342.2" y="500.00" width="5" height="1.1" fill="#66748f"/>
<rect x="1342.2" y="512.80" width="5" height="1.1" fill="#66748f"/>
<rect x="1342.2" y="525.00" width="5" height="1.1" fill="#66748f"/>
<rect x="1342.2" y="537.80" width="5" height="1.1" fill="#66748f"/>
<rect x="1342.2" y="551.70" width="5" height="1.1" fill="#66748f"/>
<rect x="1342.2" y="562.00" width="5" height="1.1" fill="#66748f"/>
<rect x="1342.2" y="572.30" width="5" height="1.1" fill="#66748f"/>
<rect x="1342.2" y="580.30" width="5" height="1.1" fill="#66748f"/>
<rect x="1342.2" y="588.30" width="5" height="1.1" fill="#66748f"/>
<rect x="1342.2" y="595.30" width="5" height="1.1" fill="#66748f"/>
<rect x="1342.2" y="600.00" width="5" height="1.1" fill="#66748f"/>
<circle cx="1419.7" cy="510.8" r="7.5" fill="#eaee12"/><circle cx="1419.7" cy="554.5" r="7.5" fill="#eaee12"/><circle cx="1419.7" cy="576.2" r="7.5" fill="#1c1f27"/><circle cx="1419.7" cy="598.3" r="7.5" fill="#1c1f27"/>
<path d="M1410.8,525.2 H1404.9 a7.25,7.25 0 0 0 0,14.5 H1410.8 Z" fill="#2f343c"/><path d="M1413.9,525.2 H1419.8 a7.25,7.25 0 0 1 0,14.5 H1413.9 Z" fill="#1b1e26"/>
<path d="M1416.6,595.2 l6,5.8 M1422.6,595.2 l-6,5.8" stroke="#c4c9d0" stroke-width="1.1"/>
<path d="M33.3,633.3 H1425 V848.3 H28.3 V638.3 a5,5 0 0 1 5,-5 Z" fill="#d9dce0"/>
<rect x="1414.00" y="653.30" width="11.00" height="195.00" fill="#a9b0b8"/>
<rect x="28.30" y="653.30" width="2.00" height="195.00" fill="#b2b8be"/>
<rect x="29.70" y="653.30" width="1386.30" height="194.20" fill="#585c63"/>
<circle cx="38.3" cy="642.9" r="6.6" fill="#eaee12" stroke="#3c3f14" stroke-width="1.3"/><rect x="37.5" y="639.3" width="1.7" height="7.2" fill="#8c8f1c"/>
<rect x="31.40" y="653.80" width="47.75" height="193.50" fill="#dedfe0"/>
<rect x="80.85" y="653.80" width="47.75" height="193.50" fill="#dedfe0"/>
<rect x="130.30" y="653.80" width="47.75" height="193.50" fill="#dedfe0"/>
<rect x="179.74" y="653.80" width="47.75" height="193.50" fill="#dedfe0"/>
<rect x="229.19" y="653.80" width="47.75" height="193.50" fill="#dedfe0"/>
<rect x="278.64" y="653.80" width="47.75" height="193.50" fill="#dedfe0"/>
<rect x="328.09" y="653.80" width="47.75" height="193.50" fill="#dedfe0"/>
<rect x="377.54" y="653.80" width="47.75" height="193.50" fill="#dedfe0"/>
<rect x="426.98" y="653.80" width="47.75" height="193.50" fill="#dedfe0"/>
<rect x="476.43" y="653.80" width="47.75" height="193.50" fill="#dedfe0"/>
<rect x="525.88" y="653.80" width="47.75" height="193.50" fill="#dedfe0"/>
<rect x="575.33" y="653.80" width="47.75" height="193.50" fill="#dedfe0"/>
<rect x="624.78" y="653.80" width="47.75" height="193.50" fill="#dedfe0"/>
<rect x="674.22" y="653.80" width="47.75" height="193.50" fill="#dedfe0"/>
<rect x="723.67" y="653.80" width="47.75" height="193.50" fill="#dedfe0"/>
<rect x="773.12" y="653.80" width="47.75" height="193.50" fill="#dedfe0"/>
<rect x="822.57" y="653.80" width="47.75" height="193.50" fill="#dedfe0"/>
<rect x="872.02" y="653.80" width="47.75" height="193.50" fill="#dedfe0"/>
<rect x="921.46" y="653.80" width="47.75" height="193.50" fill="#dedfe0"/>
<rect x="970.91" y="653.80" width="47.75" height="193.50" fill="#dedfe0"/>
<rect x="1020.36" y="653.80" width="47.75" height="193.50" fill="#dedfe0"/>
<rect x="1069.81" y="653.80" width="47.75" height="193.50" fill="#dedfe0"/>
<rect x="1119.26" y="653.80" width="47.75" height="193.50" fill="#dedfe0"/>
<rect x="1168.70" y="653.80" width="47.75" height="193.50" fill="#dedfe0"/>
<rect x="1218.15" y="653.80" width="47.75" height="193.50" fill="#dedfe0"/>
<rect x="1267.60" y="653.80" width="47.75" height="193.50" fill="#dedfe0"/>
<rect x="1317.05" y="653.80" width="47.75" height="193.50" fill="#dedfe0"/>
<rect x="1366.50" y="653.80" width="47.75" height="193.50" fill="#dedfe0"/>
<rect x="62.10" y="653.30" width="35.90" height="112.40" fill="#3c3f45"/>
<rect x="111.55" y="653.30" width="35.90" height="112.40" fill="#3c3f45"/>
<rect x="210.44" y="653.30" width="35.90" height="112.40" fill="#3c3f45"/>
<rect x="259.89" y="653.30" width="35.90" height="112.40" fill="#3c3f45"/>
<rect x="309.34" y="653.30" width="35.90" height="112.40" fill="#3c3f45"/>
<rect x="408.23" y="653.30" width="35.90" height="112.40" fill="#3c3f45"/>
<rect x="457.68" y="653.30" width="35.90" height="112.40" fill="#3c3f45"/>
<rect x="556.58" y="653.30" width="35.90" height="112.40" fill="#3c3f45"/>
<rect x="606.03" y="653.30" width="35.90" height="112.40" fill="#3c3f45"/>
<rect x="655.47" y="653.30" width="35.90" height="112.40" fill="#3c3f45"/>
<rect x="754.37" y="653.30" width="35.90" height="112.40" fill="#3c3f45"/>
<rect x="803.82" y="653.30" width="35.90" height="112.40" fill="#3c3f45"/>
<rect x="902.71" y="653.30" width="35.90" height="112.40" fill="#3c3f45"/>
<rect x="952.16" y="653.30" width="35.90" height="112.40" fill="#3c3f45"/>
<rect x="1001.61" y="653.30" width="35.90" height="112.40" fill="#3c3f45"/>
<rect x="1100.51" y="653.30" width="35.90" height="112.40" fill="#3c3f45"/>
<rect x="1149.95" y="653.30" width="35.90" height="112.40" fill="#3c3f45"/>
<rect x="1248.85" y="653.30" width="35.90" height="112.40" fill="#3c3f45"/>
<rect x="1298.30" y="653.30" width="35.90" height="112.40" fill="#3c3f45"/>
<rect x="1347.75" y="653.30" width="35.90" height="112.40" fill="#3c3f45"/>
<circle cx="1380.6" cy="643.2" r="7" fill="#95a0ab" stroke="#4f5d78" stroke-width="1.1"/>
<circle cx="1399.2" cy="643.2" r="7" fill="#95a0ab" stroke="#4f5d78" stroke-width="1.1"/>
<circle cx="1417.4" cy="643.2" r="7" fill="#95a0ab" stroke="#4f5d78" stroke-width="1.1"/>
<rect x="1377" y="640.2" width="7.2" height="6" fill="none" stroke="#0b0d15" stroke-width="1.3"/><path d="M1377.6,638.6 v1.6 M1383.6,638.6 v1.6 M1377.6,646.2 v1.6 M1383.6,646.2 v1.6" stroke="#0b0d15" stroke-width="1.3"/>
<path d="M1395.3,643.8 a4,4 0 0 1 6,-3.6 M1403.1,642.6 a4,4 0 0 1 -6,3.6" fill="none" stroke="#0b0d15" stroke-width="1.5"/><path d="M1400.3,638.6 l2.6,2 l-3,1.2 Z M1398.1,647.8 l-2.6,-2 l3,-1.2 Z" fill="#0b0d15"/>
<path d="M1413.6,639 h6.2 l1.6,1.6 v6.6 h-7.8 Z" fill="#0b0d15"/><rect x="1415.8" y="640.2" width="3" height="2.4" fill="#8a94a0"/>
<circle cx="17.8" cy="720.00" r="1.8" fill="#1c1f27"/>
<circle cx="17.8" cy="724.59" r="1.8" fill="#1c1f27"/>
<circle cx="17.8" cy="729.18" r="1.8" fill="#1c1f27"/>
<circle cx="17.8" cy="733.77" r="1.8" fill="#1c1f27"/>
<circle cx="17.8" cy="738.36" r="1.8" fill="#1c1f27"/>
<circle cx="17.8" cy="742.95" r="1.8" fill="#1c1f27"/>
<circle cx="17.8" cy="747.54" r="1.8" fill="#1c1f27"/>
<circle cx="17.8" cy="752.13" r="1.8" fill="#1c1f27"/>
<circle cx="17.8" cy="756.72" r="1.8" fill="#1c1f27"/>
<circle cx="17.8" cy="761.31" r="1.8" fill="#1c1f27"/>
<rect x="42.20" y="867.70" width="840.90" height="21.00" rx="2.5" fill="#a9b0b8" stroke="#68758f" stroke-width="4.4"/>
<rect x="897.20" y="867.70" width="234.30" height="21.00" rx="2.5" fill="#a9b0b8" stroke="#68758f" stroke-width="4.4"/>
<rect x="1201.80" y="867.80" width="113.40" height="20.90" fill="#a9b0b8" stroke="#0a0b0e" stroke-width="1.6"/>
<rect x="1316.20" y="869.00" width="5.80" height="18.00" fill="#a9b0b8"/>
<rect x="1316.6" y="869.2" width="1" height="1.6" fill="#d4d8dc"/><rect x="1318.4" y="869.2" width="1" height="1.6" fill="#c6cace"/>
<rect x="1323.88" y="868.88" width="70.75" height="18.12" fill="#c3c7cc"/>
<rect x="1323.88" y="868.88" width="70.75" height="1.88" fill="#d6d59c"/>
<rect x="1387.00" y="870.75" width="7.62" height="16.25" fill="#dcdfe3"/>
<rect x="1332.12" y="875.00" width="48.94" height="7.75" fill="#1f242b"/>
<rect x="1324.50" y="871.06" width="2.81" height="1.69" fill="#d7dc3c"/>
<rect x="1327.94" y="871.06" width="2.81" height="1.69" fill="#e2b65e"/>
<rect x="1350.12" y="871.06" width="2.50" height="1.56" fill="#d7dc3c"/>
<rect x="1352.94" y="873.00" width="3.75" height="0.88" fill="#e8b23c"/>
<rect x="1367.31" y="871.06" width="2.81" height="1.56" fill="#d7dc3c"/>
<rect x="1324.50" y="883.75" width="2.81" height="1.50" fill="#d7dc3c"/>
<rect x="1327.94" y="883.75" width="2.81" height="1.50" fill="#e2b65e"/>
<rect x="1358.25" y="871.38" width="1.56" height="2.19" fill="#dba77c"/>
<rect x="1376.38" y="871.38" width="0.94" height="2.19" fill="#dba77c"/>
<rect x="1389.19" y="871.69" width="1.25" height="1.88" fill="#e6b08c"/>
<rect x="1332.62" y="871.38" width="2.50" height="1.88" fill="#e4e7ea"/>
<rect x="1337.00" y="871.38" width="2.50" height="2.19" fill="#9aa2ab"/>
<rect x="1341.38" y="871.38" width="1.56" height="2.19" fill="#8e969f"/>
<rect x="1345.12" y="871.38" width="3.44" height="2.19" fill="#aab1b9"/>
<rect x="1362.00" y="871.38" width="3.12" height="2.19" fill="#aab1b9"/>
<rect x="1372.00" y="871.38" width="1.56" height="2.19" fill="#8e969f"/>
<rect x="1382.00" y="871.38" width="3.75" height="2.19" fill="#9aa2ab"/>
<rect x="1332.62" y="883.88" width="2.50" height="2.19" fill="#e4e7ea"/>
<rect x="1337.00" y="883.88" width="2.50" height="2.19" fill="#9aa2ab"/>
<rect x="1341.38" y="883.88" width="1.56" height="2.19" fill="#8e969f"/>
<rect x="1350.12" y="883.88" width="6.88" height="1.38" fill="#8e969f"/>
<rect x="1367.31" y="883.88" width="2.81" height="1.38" fill="#8e969f"/>
<rect x="1382.00" y="883.88" width="3.75" height="2.19" fill="#9aa2ab"/>
<rect x="1359.50" y="883.88" width="2.50" height="2.19" fill="#aab1b9"/>
<rect x="1387.94" y="875.44" width="5.31" height="1.88" fill="#b4bac2"/>
<rect x="1387.94" y="879.81" width="5.31" height="1.88" fill="#b4bac2"/>
<rect x="1387.94" y="883.56" width="2.19" height="2.81" fill="#f2f3f5"/>
<rect x="1382.00" y="875.44" width="3.75" height="1.25" fill="#aab1b9"/>
<rect x="1382.00" y="879.50" width="3.75" height="1.25" fill="#aab1b9"/>
<rect x="1324.81" y="875.44" width="5.94" height="1.25" fill="#d2d6da"/>
<rect x="1326.38" y="878.88" width="3.12" height="0.94" fill="#9aa2ab"/>
<rect x="1333.75" y="878.12" width="1.12" height="4.00" fill="#8f5a1a"/>
<rect x="1335.62" y="878.12" width="1.69" height="4.00" fill="#17693a"/>
<rect x="1339.38" y="878.12" width="1.12" height="4.00" fill="#8f5a1a"/>
<rect x="1341.00" y="878.12" width="2.00" height="4.00" fill="#17693a"/>
<rect x="1346.06" y="876.69" width="1.88" height="4.06" fill="#3c444e"/>
<rect x="1350.12" y="877.62" width="1.88" height="3.12" fill="#333a44"/>
<rect x="1355.12" y="878.38" width="1.38" height="0.81" fill="#a8681c"/>
<rect x="1355.12" y="881.38" width="1.38" height="0.75" fill="#a8681c"/>
<rect x="1359.38" y="878.75" width="1.50" height="0.88" fill="#a8681c"/>
<rect x="1359.81" y="881.50" width="0.94" height="0.62" fill="#a8681c"/>
<rect x="1363.75" y="878.88" width="1.38" height="0.75" fill="#a8681c"/>
<rect x="1368.25" y="878.75" width="0.94" height="0.75" fill="#a8681c"/>
<rect x="1368.25" y="881.50" width="1.25" height="0.62" fill="#a8681c"/>
<rect x="1371.06" y="878.88" width="0.62" height="0.94" fill="#a8681c"/>
<rect x="1352.62" y="880.12" width="9.38" height="0.50" fill="#4a525c"/>
<rect x="1372.00" y="877.00" width="2.50" height="1.38" fill="#4a525c"/>
<rect x="1376.38" y="877.00" width="2.81" height="1.38" fill="#4a525c"/>
<rect x="1333.25" y="875.88" width="5.00" height="0.62" fill="#3a424c"/>
<rect x="1339.50" y="876.50" width="5.00" height="0.50" fill="#3a424c"/>
</svg>
<div class="t" style="top:15px;font-size:11px;line-height:11px;color:#000;font-weight:bold;transform:scaleY(0.95);transform-origin:0 9px;left:0.00px;width:56px;text-align:center;">TAP</div>
<div class="t" style="top:13px;font-size:13.3px;line-height:13.3px;color:#000;left:52.70px;">128.00</div>
<div class="t" style="top:14px;font-size:12px;line-height:12px;color:#000;left:144.30px;width:20px;text-align:center;">4</div>
<div class="t" style="top:14px;font-size:12px;line-height:12px;color:#000;left:157.00px;width:20px;text-align:center;">/</div>
<div class="t" style="top:14px;font-size:12px;line-height:12px;color:#000;left:170.50px;width:20px;text-align:center;">4</div>
<div class="t" style="top:15px;font-size:10.8px;line-height:10.8px;color:#000;font-weight:bold;transform:scaleY(0.95);transform-origin:0 9px;left:245.80px;">1/16</div>
<div class="t" style="top:13px;font-size:13px;line-height:13px;color:#000;left:479.40px;width:20px;text-align:right;">4</div>
<div class="t" style="top:13px;font-size:13px;line-height:13px;color:#000;left:450.60px;width:20px;text-align:right;">4</div>
<div class="t" style="top:13px;font-size:13px;line-height:13px;color:#000;left:475.20px;">.</div>
<div class="t" style="top:13px;font-size:13px;line-height:13px;color:#000;left:421.80px;width:20px;text-align:right;">2</div>
<div class="t" style="top:13px;font-size:13px;line-height:13px;color:#000;left:446.40px;">.</div>
<div class="t" style="top:15px;font-size:11px;line-height:11px;color:#000;font-weight:bold;transform:scaleY(0.95);transform-origin:0 9px;left:676.70px;width:55.299999999999955px;text-align:center;">NEW</div>
<div class="t" style="top:13px;font-size:13px;line-height:13px;color:#000;left:883.10px;width:20px;text-align:right;">1</div>
<div class="t" style="top:13px;font-size:13px;line-height:13px;color:#000;left:854.30px;width:20px;text-align:right;">1</div>
<div class="t" style="top:13px;font-size:13px;line-height:13px;color:#000;left:878.90px;">.</div>
<div class="t" style="top:13px;font-size:13px;line-height:13px;color:#000;left:825.50px;width:20px;text-align:right;">1</div>
<div class="t" style="top:13px;font-size:13px;line-height:13px;color:#000;left:850.10px;">.</div>
<div class="t" style="top:13px;font-size:13px;line-height:13px;color:#000;left:1087.40px;width:20px;text-align:right;">0</div>
<div class="t" style="top:13px;font-size:13px;line-height:13px;color:#000;left:1058.60px;width:20px;text-align:right;">0</div>
<div class="t" style="top:13px;font-size:13px;line-height:13px;color:#000;left:1083.20px;">.</div>
<div class="t" style="top:13px;font-size:13px;line-height:13px;color:#000;left:1029.80px;width:20px;text-align:right;">4</div>
<div class="t" style="top:13px;font-size:13px;line-height:13px;color:#000;left:1054.40px;">.</div>
<div class="t" style="top:15px;font-size:11px;line-height:11px;color:#000;font-weight:bold;transform:scaleY(0.95);transform-origin:0 9px;left:1231.20px;width:55.799999999999955px;text-align:center;">KEY</div>
<div class="t" style="top:15px;font-size:11px;line-height:11px;color:#000;font-weight:bold;transform:scaleY(0.95);transform-origin:0 9px;left:1280.30px;width:55.90000000000009px;text-align:center;">MIDI</div>
<div class="t" style="top:14px;font-size:11px;line-height:11px;color:#000;font-weight:bold;transform:scaleY(0.95);transform-origin:0 9px;left:1334.00px;width:60px;text-align:center;">12 %</div>
<div class="t" style="top:15px;font-size:11px;line-height:11px;color:#000;font-weight:bold;transform:scaleY(0.95);transform-origin:0 9px;left:1390.00px;width:38.799999999999955px;text-align:center;">D</div>
<div class="t" style="top:50px;font-size:11.5px;line-height:11.5px;color:#777b80;left:50.80px;">Search (Cmd + F)</div>
<div class="t" style="top:76px;font-size:12px;line-height:12px;color:#e4e6e8;font-weight:bold;transform:scaleY(0.95);transform-origin:0 10px;left:19.70px;">CATEGORIES</div>
<div class="t" style="top:316px;font-size:12px;line-height:12px;color:#e4e6e8;font-weight:bold;transform:scaleY(0.95);transform-origin:0 10px;left:23.30px;">PLACES</div>
<div class="t" style="top:98px;font-size:11px;line-height:11px;color:#0d0f16;font-weight:bold;transform:scaleY(0.95);transform-origin:0 9px;left:42.60px;">Sounds</div>
<div class="t" style="top:119px;font-size:11px;line-height:11px;color:#0d0f16;font-weight:bold;transform:scaleY(0.95);transform-origin:0 9px;left:42.60px;">Drums</div>
<div class="t" style="top:141px;font-size:11px;line-height:11px;color:#0d0f16;font-weight:bold;transform:scaleY(0.95);transform-origin:0 9px;left:42.60px;">Instruments</div>
<div class="t" style="top:163px;font-size:11px;line-height:11px;color:#0d0f16;font-weight:bold;transform:scaleY(0.95);transform-origin:0 9px;left:42.60px;">Audio Effects</div>
<div class="t" style="top:185px;font-size:11px;line-height:11px;color:#0d0f16;font-weight:bold;transform:scaleY(0.95);transform-origin:0 9px;left:42.60px;">MIDI Effects</div>
<div class="t" style="top:207px;font-size:11px;line-height:11px;color:#0d0f16;font-weight:bold;transform:scaleY(0.95);transform-origin:0 9px;left:42.60px;">Max for Live</div>
<div class="t" style="top:229px;font-size:11px;line-height:11px;color:#0d0f16;font-weight:bold;transform:scaleY(0.95);transform-origin:0 9px;left:42.60px;">Plug-ins</div>
<div class="t" style="top:250px;font-size:11px;line-height:11px;color:#0d0f16;font-weight:bold;transform:scaleY(0.95);transform-origin:0 9px;left:42.60px;">Clips</div>
<div class="t" style="top:272px;font-size:11px;line-height:11px;color:#0d0f16;font-weight:bold;transform:scaleY(0.95);transform-origin:0 9px;left:42.60px;">Samples</div>
<div style="left:15px;top:332px;width:213px;height:251.8px;overflow:hidden">
<div class="t" style="top:6px;font-size:11px;line-height:11px;color:#0d0f16;font-weight:bold;transform:scaleY(0.95);transform-origin:0 9px;left:27.60px;">Packs</div>
<div class="t" style="top:28px;font-size:11px;line-height:11px;color:#0d0f16;font-weight:bold;transform:scaleY(0.95);transform-origin:0 9px;left:27.60px;">User Library</div>
<div class="t" style="top:49px;font-size:11px;line-height:11px;color:#0d0f16;font-weight:bold;transform:scaleY(0.95);transform-origin:0 9px;left:27.60px;">Current Project</div>
<div class="t" style="top:71px;font-size:11px;line-height:11px;color:#0d0f16;font-weight:bold;transform:scaleY(0.95);transform-origin:0 9px;left:27.60px;">Projects</div>
<div class="t" style="top:93px;font-size:11px;line-height:11px;color:#0d0f16;font-weight:bold;transform:scaleY(0.95);transform-origin:0 9px;left:27.60px;">Ableton</div>
<div class="t" style="top:115px;font-size:11px;line-height:11px;color:#0d0f16;font-weight:bold;transform:scaleY(0.95);transform-origin:0 9px;left:27.60px;">Samples Categorized</div>
<div class="t" style="top:137px;font-size:11px;line-height:11px;color:#0d0f16;font-weight:bold;transform:scaleY(0.95);transform-origin:0 9px;left:27.60px;">Blend</div>
<div class="t" style="top:159px;font-size:11px;line-height:11px;color:#0d0f16;font-weight:bold;transform:scaleY(0.95);transform-origin:0 9px;left:27.60px;">Desktop</div>
<div class="t" style="top:181px;font-size:11px;line-height:11px;color:#0d0f16;font-weight:bold;transform:scaleY(0.95);transform-origin:0 9px;left:27.60px;">Downloads</div>
<div class="t" style="top:202px;font-size:11px;line-height:11px;color:#0d0f16;font-weight:bold;transform:scaleY(0.95);transform-origin:0 9px;left:27.60px;">Documents</div>
<div class="t" style="top:224px;font-size:11px;line-height:11px;color:#0d0f16;font-weight:bold;transform:scaleY(0.95);transform-origin:0 9px;left:27.60px;">Sound Library15</div>
<div class="t" style="top:246px;font-size:11px;line-height:11px;color:#0d0f16;font-weight:bold;transform:scaleY(0.95);transform-origin:0 9px;left:27.60px;">Add Folder</div>
</div>
<div class="t" style="top:77px;font-size:11px;line-height:11px;color:#05060a;font-weight:bold;transform:scaleY(0.95);transform-origin:0 9px;left:252.40px;">Name</div>
<div class="t" style="top:98px;font-size:11px;line-height:11px;color:#0d0f16;font-weight:bold;transform:scaleY(0.95);transform-origin:0 9px;left:290.20px;">Analog</div>
<div class="t" style="top:119px;font-size:11px;line-height:11px;color:#0d0f16;font-weight:bold;transform:scaleY(0.95);transform-origin:0 9px;left:290.20px;">Collision</div>
<div class="t" style="top:141px;font-size:11px;line-height:11px;color:#0d0f16;font-weight:bold;transform:scaleY(0.95);transform-origin:0 9px;left:290.20px;">Drum Rack</div>
<div class="t" style="top:163px;font-size:11px;line-height:11px;color:#0d0f16;font-weight:bold;transform:scaleY(0.95);transform-origin:0 9px;left:290.20px;">Electric</div>
<div class="t" style="top:185px;font-size:11px;line-height:11px;color:#0d0f16;font-weight:bold;transform:scaleY(0.95);transform-origin:0 9px;left:290.20px;">External Instrument</div>
<div class="t" style="top:207px;font-size:11px;line-height:11px;color:#0d0f16;font-weight:bold;transform:scaleY(0.95);transform-origin:0 9px;left:290.20px;">Impulse</div>
<div class="t" style="top:229px;font-size:11px;line-height:11px;color:#0d0f16;font-weight:bold;transform:scaleY(0.95);transform-origin:0 9px;left:290.20px;">Instrument Rack</div>
<div class="t" style="top:250px;font-size:11px;line-height:11px;color:#0d0f16;font-weight:bold;transform:scaleY(0.95);transform-origin:0 9px;left:290.20px;">Operator</div>
<div class="t" style="top:272px;font-size:11px;line-height:11px;color:#0d0f16;font-weight:bold;transform:scaleY(0.95);transform-origin:0 9px;left:290.20px;">Sampler</div>
<div class="t" style="top:294px;font-size:11px;line-height:11px;color:#0d0f16;font-weight:bold;transform:scaleY(0.95);transform-origin:0 9px;left:290.20px;">Simpler</div>
<div class="t" style="top:316px;font-size:11px;line-height:11px;color:#0d0f16;font-weight:bold;transform:scaleY(0.95);transform-origin:0 9px;left:290.20px;">Tension</div>
<div class="t" style="top:65px;font-size:12.3px;line-height:12.3px;color:#000;font-weight:bold;transform:scaleY(0.95);transform-origin:0 10px;font-style:italic;left:488.10px;white-space:pre;">1 Audio</div>
<div class="t" style="top:341px;font-size:11px;line-height:11px;color:#0d0f16;font-weight:bold;transform:scaleY(0.95);transform-origin:0 9px;left:486.70px;">A. From</div>
<div class="t" style="top:389px;font-size:11px;line-height:11px;color:#0d0f16;font-weight:bold;transform:scaleY(0.95);transform-origin:0 9px;left:486.70px;">Monitor</div>
<div class="t" style="top:419px;font-size:11px;line-height:11px;color:#0d0f16;font-weight:bold;transform:scaleY(0.95);transform-origin:0 9px;left:486.70px;">A. To</div>
<div class="t" style="top:356px;font-size:11.3px;line-height:11.3px;color:#15171e;left:489.00px;width:44.80px;overflow:hidden;height:13px;">Ext. In</div>
<div class="t" style="top:374px;font-size:11.3px;line-height:11.3px;color:#b4bac4;left:489.00px;width:44.80px;overflow:hidden;height:13px;">1</div>
<div class="t" style="top:404px;font-size:11.3px;line-height:11.3px;color:#15171e;left:489.00px;width:44.80px;overflow:hidden;height:13px;">Off</div>
<div class="t" style="top:434px;font-size:11.3px;line-height:11.3px;color:#15171e;left:489.00px;width:44.80px;overflow:hidden;height:13px;">Master</div>
<div class="t" style="top:477px;font-size:11px;line-height:11px;color:#15171e;left:485.00px;width:36px;text-align:center;">-Inf</div>
<div class="t" style="top:508px;font-size:11px;line-height:11px;color:#15171e;left:485.00px;width:36px;text-align:center;">C</div>
<div class="t" style="top:544px;font-size:13px;line-height:13px;color:#000;font-weight:bold;transform:scaleY(0.95);transform-origin:0 11px;left:485.00px;width:36px;text-align:center;">1</div>
<div class="t" style="top:571px;font-size:11px;line-height:11px;color:#0b0d12;font-weight:bold;transform:scaleY(0.95);transform-origin:0 9px;left:485.00px;width:36px;text-align:center;">S</div>
<div class="t" style="top:65px;font-size:12.3px;line-height:12.3px;color:#000;font-weight:bold;transform:scaleY(0.95);transform-origin:0 10px;font-style:italic;left:553.72px;white-space:pre;">2 Audio</div>
<div class="t" style="top:341px;font-size:11px;line-height:11px;color:#0d0f16;font-weight:bold;transform:scaleY(0.95);transform-origin:0 9px;left:552.32px;">A. From</div>
<div class="t" style="top:389px;font-size:11px;line-height:11px;color:#0d0f16;font-weight:bold;transform:scaleY(0.95);transform-origin:0 9px;left:552.32px;">Monitor</div>
<div class="t" style="top:419px;font-size:11px;line-height:11px;color:#0d0f16;font-weight:bold;transform:scaleY(0.95);transform-origin:0 9px;left:552.32px;">A. To</div>
<div class="t" style="top:356px;font-size:11.3px;line-height:11.3px;color:#15171e;left:554.62px;width:44.80px;overflow:hidden;height:13px;">Ext. In</div>
<div class="t" style="top:374px;font-size:11.3px;line-height:11.3px;color:#b4bac4;left:554.62px;width:44.80px;overflow:hidden;height:13px;">1</div>
<div class="t" style="top:404px;font-size:11.3px;line-height:11.3px;color:#15171e;left:554.62px;width:44.80px;overflow:hidden;height:13px;">Off</div>
<div class="t" style="top:434px;font-size:11.3px;line-height:11.3px;color:#15171e;left:554.62px;width:44.80px;overflow:hidden;height:13px;">Master</div>
<div class="t" style="top:477px;font-size:11px;line-height:11px;color:#15171e;left:550.62px;width:36px;text-align:center;">-Inf</div>
<div class="t" style="top:508px;font-size:11px;line-height:11px;color:#15171e;left:550.62px;width:36px;text-align:center;">C</div>
<div class="t" style="top:544px;font-size:13px;line-height:13px;color:#000;font-weight:bold;transform:scaleY(0.95);transform-origin:0 11px;left:550.62px;width:36px;text-align:center;">2</div>
<div class="t" style="top:571px;font-size:11px;line-height:11px;color:#0b0d12;font-weight:bold;transform:scaleY(0.95);transform-origin:0 9px;left:550.62px;width:36px;text-align:center;">S</div>
<div class="t" style="top:65px;font-size:12.3px;line-height:12.3px;color:#000;font-weight:bold;transform:scaleY(0.95);transform-origin:0 10px;font-style:italic;left:619.34px;white-space:pre;">3 Audio</div>
<div class="t" style="top:341px;font-size:11px;line-height:11px;color:#0d0f16;font-weight:bold;transform:scaleY(0.95);transform-origin:0 9px;left:617.94px;">A. From</div>
<div class="t" style="top:389px;font-size:11px;line-height:11px;color:#0d0f16;font-weight:bold;transform:scaleY(0.95);transform-origin:0 9px;left:617.94px;">Monitor</div>
<div class="t" style="top:419px;font-size:11px;line-height:11px;color:#0d0f16;font-weight:bold;transform:scaleY(0.95);transform-origin:0 9px;left:617.94px;">A. To</div>
<div class="t" style="top:356px;font-size:11.3px;line-height:11.3px;color:#15171e;left:620.24px;width:44.80px;overflow:hidden;height:13px;">Ext. In</div>
<div class="t" style="top:374px;font-size:11.3px;line-height:11.3px;color:#b4bac4;left:620.24px;width:44.80px;overflow:hidden;height:13px;">1</div>
<div class="t" style="top:404px;font-size:11.3px;line-height:11.3px;color:#15171e;left:620.24px;width:44.80px;overflow:hidden;height:13px;">Off</div>
<div class="t" style="top:434px;font-size:11.3px;line-height:11.3px;color:#15171e;left:620.24px;width:44.80px;overflow:hidden;height:13px;">Master</div>
<div class="t" style="top:477px;font-size:11px;line-height:11px;color:#15171e;left:616.24px;width:36px;text-align:center;">-Inf</div>
<div class="t" style="top:508px;font-size:11px;line-height:11px;color:#15171e;left:616.24px;width:36px;text-align:center;">C</div>
<div class="t" style="top:544px;font-size:13px;line-height:13px;color:#000;font-weight:bold;transform:scaleY(0.95);transform-origin:0 11px;left:616.24px;width:36px;text-align:center;">3</div>
<div class="t" style="top:571px;font-size:11px;line-height:11px;color:#0b0d12;font-weight:bold;transform:scaleY(0.95);transform-origin:0 9px;left:616.24px;width:36px;text-align:center;">S</div>
<div class="t" style="top:65px;font-size:12.3px;line-height:12.3px;color:#000;font-weight:bold;transform:scaleY(0.95);transform-origin:0 10px;font-style:italic;left:684.96px;white-space:pre;word-spacing:1.2px;">4 Audio</div>
<div class="t" style="top:341px;font-size:11px;line-height:11px;color:#0d0f16;font-weight:bold;transform:scaleY(0.95);transform-origin:0 9px;left:683.56px;">A. From</div>
<div class="t" style="top:389px;font-size:11px;line-height:11px;color:#0d0f16;font-weight:bold;transform:scaleY(0.95);transform-origin:0 9px;left:683.56px;">Monitor</div>
<div class="t" style="top:419px;font-size:11px;line-height:11px;color:#0d0f16;font-weight:bold;transform:scaleY(0.95);transform-origin:0 9px;left:683.56px;">A. To</div>
<div class="t" style="top:356px;font-size:11.3px;line-height:11.3px;color:#15171e;left:685.86px;width:44.80px;overflow:hidden;height:13px;">Ext. In</div>
<div class="t" style="top:374px;font-size:11.3px;line-height:11.3px;color:#b4bac4;left:685.86px;width:44.80px;overflow:hidden;height:13px;">1</div>
<div class="t" style="top:404px;font-size:11.3px;line-height:11.3px;color:#15171e;left:685.86px;width:44.80px;overflow:hidden;height:13px;">Off</div>
<div class="t" style="top:434px;font-size:11.3px;line-height:11.3px;color:#15171e;left:685.86px;width:44.80px;overflow:hidden;height:13px;">Master</div>
<div class="t" style="top:477px;font-size:11px;line-height:11px;color:#15171e;left:681.86px;width:36px;text-align:center;">-Inf</div>
<div class="t" style="top:508px;font-size:11px;line-height:11px;color:#15171e;left:681.86px;width:36px;text-align:center;">C</div>
<div class="t" style="top:544px;font-size:13px;line-height:13px;color:#000;font-weight:bold;transform:scaleY(0.95);transform-origin:0 11px;left:681.86px;width:36px;text-align:center;">4</div>
<div class="t" style="top:571px;font-size:11px;line-height:11px;color:#0b0d12;font-weight:bold;transform:scaleY(0.95);transform-origin:0 9px;left:681.86px;width:36px;text-align:center;">S</div>
<div class="t" style="top:65px;font-size:12.3px;line-height:12.3px;color:#000;font-weight:bold;transform:scaleY(0.95);transform-origin:0 10px;font-style:italic;left:750.58px;white-space:pre;word-spacing:1.2px;">5 Audio</div>
<div class="t" style="top:341px;font-size:11px;line-height:11px;color:#0d0f16;font-weight:bold;transform:scaleY(0.95);transform-origin:0 9px;left:749.18px;">A. From</div>
<div class="t" style="top:389px;font-size:11px;line-height:11px;color:#0d0f16;font-weight:bold;transform:scaleY(0.95);transform-origin:0 9px;left:749.18px;">Monitor</div>
<div class="t" style="top:419px;font-size:11px;line-height:11px;color:#0d0f16;font-weight:bold;transform:scaleY(0.95);transform-origin:0 9px;left:749.18px;">A. To</div>
<div class="t" style="top:356px;font-size:11.3px;line-height:11.3px;color:#15171e;left:751.48px;width:44.80px;overflow:hidden;height:13px;">Ext. In</div>
<div class="t" style="top:374px;font-size:11.3px;line-height:11.3px;color:#b4bac4;left:751.48px;width:44.80px;overflow:hidden;height:13px;">1</div>
<div class="t" style="top:404px;font-size:11.3px;line-height:11.3px;color:#15171e;left:751.48px;width:44.80px;overflow:hidden;height:13px;">Off</div>
<div class="t" style="top:434px;font-size:11.3px;line-height:11.3px;color:#15171e;left:751.48px;width:44.80px;overflow:hidden;height:13px;">Master</div>
<div class="t" style="top:477px;font-size:11px;line-height:11px;color:#15171e;left:747.48px;width:36px;text-align:center;">-Inf</div>
<div class="t" style="top:508px;font-size:11px;line-height:11px;color:#15171e;left:747.48px;width:36px;text-align:center;">C</div>
<div class="t" style="top:544px;font-size:13px;line-height:13px;color:#000;font-weight:bold;transform:scaleY(0.95);transform-origin:0 11px;left:747.48px;width:36px;text-align:center;">5</div>
<div class="t" style="top:571px;font-size:11px;line-height:11px;color:#0b0d12;font-weight:bold;transform:scaleY(0.95);transform-origin:0 9px;left:747.48px;width:36px;text-align:center;">S</div>
<div class="t" style="top:65px;font-size:12.3px;line-height:12.3px;color:#000;font-weight:bold;transform:scaleY(0.95);transform-origin:0 10px;font-style:italic;left:816.20px;white-space:pre;">6 Audio</div>
<div class="t" style="top:341px;font-size:11px;line-height:11px;color:#0d0f16;font-weight:bold;transform:scaleY(0.95);transform-origin:0 9px;left:814.80px;">A. From</div>
<div class="t" style="top:389px;font-size:11px;line-height:11px;color:#0d0f16;font-weight:bold;transform:scaleY(0.95);transform-origin:0 9px;left:814.80px;">Monitor</div>
<div class="t" style="top:419px;font-size:11px;line-height:11px;color:#0d0f16;font-weight:bold;transform:scaleY(0.95);transform-origin:0 9px;left:814.80px;">A. To</div>
<div class="t" style="top:356px;font-size:11.3px;line-height:11.3px;color:#15171e;left:817.10px;width:44.80px;overflow:hidden;height:13px;">Ext. In</div>
<div class="t" style="top:374px;font-size:11.3px;line-height:11.3px;color:#b4bac4;left:817.10px;width:44.80px;overflow:hidden;height:13px;">1</div>
<div class="t" style="top:404px;font-size:11.3px;line-height:11.3px;color:#15171e;left:817.10px;width:44.80px;overflow:hidden;height:13px;">Off</div>
<div class="t" style="top:434px;font-size:11.3px;line-height:11.3px;color:#15171e;left:817.10px;width:44.80px;overflow:hidden;height:13px;">Master</div>
<div class="t" style="top:477px;font-size:11px;line-height:11px;color:#15171e;left:813.10px;width:36px;text-align:center;">-Inf</div>
<div class="t" style="top:508px;font-size:11px;line-height:11px;color:#15171e;left:813.10px;width:36px;text-align:center;">C</div>
<div class="t" style="top:544px;font-size:13px;line-height:13px;color:#000;font-weight:bold;transform:scaleY(0.95);transform-origin:0 11px;left:813.10px;width:36px;text-align:center;">6</div>
<div class="t" style="top:571px;font-size:11px;line-height:11px;color:#0b0d12;font-weight:bold;transform:scaleY(0.95);transform-origin:0 9px;left:813.10px;width:36px;text-align:center;">S</div>
<div class="t" style="top:65px;font-size:12.3px;line-height:12.3px;color:#000;font-weight:bold;transform:scaleY(0.95);transform-origin:0 10px;font-style:italic;left:881.82px;white-space:pre;word-spacing:1.2px;">7 Audio</div>
<div class="t" style="top:341px;font-size:11px;line-height:11px;color:#0d0f16;font-weight:bold;transform:scaleY(0.95);transform-origin:0 9px;left:880.42px;">A. From</div>
<div class="t" style="top:389px;font-size:11px;line-height:11px;color:#0d0f16;font-weight:bold;transform:scaleY(0.95);transform-origin:0 9px;left:880.42px;">Monitor</div>
<div class="t" style="top:419px;font-size:11px;line-height:11px;color:#0d0f16;font-weight:bold;transform:scaleY(0.95);transform-origin:0 9px;left:880.42px;">A. To</div>
<div class="t" style="top:356px;font-size:11.3px;line-height:11.3px;color:#15171e;left:882.72px;width:44.80px;overflow:hidden;height:13px;">Ext. In</div>
<div class="t" style="top:374px;font-size:11.3px;line-height:11.3px;color:#b4bac4;left:882.72px;width:44.80px;overflow:hidden;height:13px;">1</div>
<div class="t" style="top:404px;font-size:11.3px;line-height:11.3px;color:#15171e;left:882.72px;width:44.80px;overflow:hidden;height:13px;">Off</div>
<div class="t" style="top:434px;font-size:11.3px;line-height:11.3px;color:#15171e;left:882.72px;width:44.80px;overflow:hidden;height:13px;">Master</div>
<div class="t" style="top:477px;font-size:11px;line-height:11px;color:#15171e;left:878.72px;width:36px;text-align:center;">-Inf</div>
<div class="t" style="top:508px;font-size:11px;line-height:11px;color:#15171e;left:878.72px;width:36px;text-align:center;">C</div>
<div class="t" style="top:544px;font-size:13px;line-height:13px;color:#000;font-weight:bold;transform:scaleY(0.95);transform-origin:0 11px;left:878.72px;width:36px;text-align:center;">7</div>
<div class="t" style="top:571px;font-size:11px;line-height:11px;color:#0b0d12;font-weight:bold;transform:scaleY(0.95);transform-origin:0 9px;left:878.72px;width:36px;text-align:center;">S</div>
<div class="t" style="top:65px;font-size:12.3px;line-height:12.3px;color:#fff;font-weight:bold;transform:scaleY(0.95);transform-origin:0 10px;font-style:italic;left:947.44px;white-space:pre;">8 MIDI</div>
<div class="t" style="top:341px;font-size:11px;line-height:11px;color:#0d0f16;font-weight:bold;transform:scaleY(0.95);transform-origin:0 9px;left:946.04px;">M. From</div>
<div class="t" style="top:389px;font-size:11px;line-height:11px;color:#0d0f16;font-weight:bold;transform:scaleY(0.95);transform-origin:0 9px;left:946.04px;">Monitor</div>
<div class="t" style="top:419px;font-size:11px;line-height:11px;color:#0d0f16;font-weight:bold;transform:scaleY(0.95);transform-origin:0 9px;left:946.04px;">M. To</div>
<div class="t" style="top:356px;font-size:11.3px;line-height:11.3px;color:#15171e;left:948.34px;width:44.80px;overflow:hidden;height:13px;">All Ins</div>
<div class="t" style="top:374px;font-size:11.3px;line-height:11.3px;color:#15171e;left:958.14px;width:35.00px;overflow:hidden;height:13px;">All Channels</div>
<div class="t" style="top:404px;font-size:11.3px;line-height:11.3px;color:#15171e;left:948.34px;width:44.80px;overflow:hidden;height:13px;">Auto</div>
<div class="t" style="top:434px;font-size:11.3px;line-height:11.3px;color:#15171e;left:948.34px;width:44.80px;overflow:hidden;height:13px;">No Output</div>
<div class="t" style="top:544px;font-size:13px;line-height:13px;color:#000;font-weight:bold;transform:scaleY(0.95);transform-origin:0 11px;left:944.34px;width:36px;text-align:center;">8</div>
<div class="t" style="top:571px;font-size:11px;line-height:11px;color:#0b0d12;font-weight:bold;transform:scaleY(0.95);transform-origin:0 9px;left:944.34px;width:36px;text-align:center;">S</div>
<div class="t" style="top:65px;font-size:12.3px;line-height:12.3px;color:#000;font-weight:bold;transform:scaleY(0.95);transform-origin:0 10px;font-style:italic;left:1013.06px;white-space:pre;">9 Analog</div>
<div class="t" style="top:341px;font-size:11px;line-height:11px;color:#0d0f16;font-weight:bold;transform:scaleY(0.95);transform-origin:0 9px;left:1011.66px;">M. From</div>
<div class="t" style="top:389px;font-size:11px;line-height:11px;color:#0d0f16;font-weight:bold;transform:scaleY(0.95);transform-origin:0 9px;left:1011.66px;">Monitor</div>
<div class="t" style="top:419px;font-size:11px;line-height:11px;color:#0d0f16;font-weight:bold;transform:scaleY(0.95);transform-origin:0 9px;left:1011.66px;">A. To</div>
<div class="t" style="top:356px;font-size:11.3px;line-height:11.3px;color:#15171e;left:1013.96px;width:44.80px;overflow:hidden;height:13px;">All Ins</div>
<div class="t" style="top:374px;font-size:11.3px;line-height:11.3px;color:#15171e;left:1023.76px;width:35.00px;overflow:hidden;height:13px;">All Channels</div>
<div class="t" style="top:404px;font-size:11.3px;line-height:11.3px;color:#15171e;left:1013.96px;width:44.80px;overflow:hidden;height:13px;">Auto</div>
<div class="t" style="top:434px;font-size:11.3px;line-height:11.3px;color:#15171e;left:1013.96px;width:44.80px;overflow:hidden;height:13px;">Master</div>
<div class="t" style="top:477px;font-size:11px;line-height:11px;color:#15171e;left:1009.96px;width:36px;text-align:center;">-3</div>
<div class="t" style="top:508px;font-size:11px;line-height:11px;color:#15171e;left:1009.96px;width:36px;text-align:center;">C</div>
<div class="t" style="top:544px;font-size:13px;line-height:13px;color:#000;font-weight:bold;transform:scaleY(0.95);transform-origin:0 11px;left:1009.96px;width:36px;text-align:center;">9</div>
<div class="t" style="top:571px;font-size:11px;line-height:11px;color:#0b0d12;font-weight:bold;transform:scaleY(0.95);transform-origin:0 9px;left:1009.96px;width:36px;text-align:center;">S</div>
<div class="t" style="top:163px;font-size:11px;line-height:11px;color:#0d0f16;font-weight:bold;transform:scaleY(0.95);transform-origin:0 9px;left:1075.00px;width:164.29999999999995px;text-align:center;">Drop Files and Devices Here</div>
<div class="t" style="top:65px;font-size:12.3px;line-height:12.3px;color:#000;font-weight:bold;transform:scaleY(0.95);transform-origin:0 10px;font-style:italic;left:1249.70px;">Master</div>
<div class="t" style="top:90px;font-size:12px;line-height:12px;color:#0d0f16;font-weight:bold;transform:scaleY(0.95);transform-origin:0 10px;font-style:italic;left:1312.50px;width:30px;text-align:center;">1</div>
<div class="t" style="top:110px;font-size:12px;line-height:12px;color:#0d0f16;font-weight:bold;transform:scaleY(0.95);transform-origin:0 10px;font-style:italic;left:1312.50px;width:30px;text-align:center;">2</div>
<div class="t" style="top:131px;font-size:12px;line-height:12px;color:#0d0f16;font-weight:bold;transform:scaleY(0.95);transform-origin:0 10px;font-style:italic;left:1312.50px;width:30px;text-align:center;">3</div>
<div class="t" style="top:152px;font-size:12px;line-height:12px;color:#0d0f16;font-weight:bold;transform:scaleY(0.95);transform-origin:0 10px;font-style:italic;left:1312.50px;width:30px;text-align:center;">4</div>
<div class="t" style="top:173px;font-size:12px;line-height:12px;color:#0d0f16;font-weight:bold;transform:scaleY(0.95);transform-origin:0 10px;font-style:italic;left:1312.50px;width:30px;text-align:center;">5</div>
<div class="t" style="top:193px;font-size:12px;line-height:12px;color:#0d0f16;font-weight:bold;transform:scaleY(0.95);transform-origin:0 10px;font-style:italic;left:1312.50px;width:30px;text-align:center;">6</div>
<div class="t" style="top:214px;font-size:12px;line-height:12px;color:#0d0f16;font-weight:bold;transform:scaleY(0.95);transform-origin:0 10px;font-style:italic;left:1312.50px;width:30px;text-align:center;">7</div>
<div class="t" style="top:235px;font-size:12px;line-height:12px;color:#0d0f16;font-weight:bold;transform:scaleY(0.95);transform-origin:0 10px;font-style:italic;left:1312.50px;width:30px;text-align:center;">8</div>
<div class="t" style="top:403px;font-size:11px;line-height:11px;color:#0d0f16;font-weight:bold;transform:scaleY(0.95);transform-origin:0 9px;left:1244.70px;">Cue Out</div>
<div class="t" style="top:438px;font-size:11px;line-height:11px;color:#0d0f16;font-weight:bold;transform:scaleY(0.95);transform-origin:0 9px;left:1244.70px;">Master Out</div>
<div class="t" style="top:417px;font-size:11.3px;line-height:11.3px;color:#15171e;left:1257.40px;width:121.70px;overflow:hidden;height:13px;">1/2</div>
<div class="t" style="top:453px;font-size:11.3px;line-height:11.3px;color:#15171e;left:1257.40px;width:121.70px;overflow:hidden;height:13px;">1/2</div>
<div class="t" style="top:477px;font-size:11px;line-height:11px;color:#15171e;left:1273.00px;width:49.5px;text-align:center;">-4.81</div>
<div class="t" style="top:552px;font-size:11px;line-height:11px;color:#7f8896;left:1280.00px;width:36.7px;text-align:center;">Solo</div>
<div class="t" style="top:482px;font-size:10.5px;line-height:10.5px;color:#0d0f16;left:1339.80px;width:30px;text-align:right;">0</div>
<div class="t" style="top:507px;font-size:10.5px;line-height:10.5px;color:#0d0f16;left:1339.80px;width:30px;text-align:right;">12</div>
<div class="t" style="top:533px;font-size:10.5px;line-height:10.5px;color:#0d0f16;left:1339.80px;width:30px;text-align:right;">24</div>
<div class="t" style="top:557px;font-size:10.5px;line-height:10.5px;color:#0d0f16;left:1339.80px;width:30px;text-align:right;">36</div>
<div class="t" style="top:575px;font-size:10.5px;line-height:10.5px;color:#0d0f16;left:1339.80px;width:30px;text-align:right;">48</div>
<div class="t" style="top:590px;font-size:10.5px;line-height:10.5px;color:#0d0f16;left:1339.80px;width:30px;text-align:right;">60</div>
<div class="t" style="top:508px;font-size:7.5px;line-height:7.5px;color:#7f8218;left:1409.60px;width:20px;text-align:center;transform:scaleX(1.3);transform-origin:50% 50%;letter-spacing:-.3px;">I·O</div>
<div class="t" style="top:552px;font-size:7.5px;line-height:7.5px;color:#7f8218;left:1409.60px;width:20px;text-align:center;transform:scaleX(1.3);transform-origin:50% 50%;">M</div>
<div class="t" style="top:530px;font-size:7.5px;line-height:7.5px;color:#a4abb4;left:1394.40px;width:20px;text-align:center;transform:scaleX(1.3);transform-origin:50% 50%;">S</div>
<div class="t" style="top:530px;font-size:7.5px;line-height:7.5px;color:#c4c9d0;left:1410.20px;width:20px;text-align:center;transform:scaleX(1.3);transform-origin:50% 50%;">R</div>
<div class="t" style="top:573px;font-size:7.5px;line-height:7.5px;color:#c4c9d0;left:1409.60px;width:20px;text-align:center;transform:scaleX(1.3);transform-origin:50% 50%;">D</div>
<div class="t" style="top:636px;font-size:12.2px;line-height:12.2px;color:#0b0d14;font-weight:bold;transform:scaleY(0.9);transform-origin:0 10px;font-style:italic;left:51.30px;">PianoPlayer</div>
<div class="t" style="top:873px;font-size:11px;line-height:11px;color:#0b0d14;font-weight:bold;transform:scaleY(0.95);transform-origin:0 9px;left:1149.50px;">9-Analog</div>
<div class="t" style="top:874px;font-size:9.8px;line-height:9.8px;color:#0b0d14;font-weight:bold;transform:scaleY(0.95);transform-origin:0 8px;left:1206.50px;width:110px;text-align:center;">PianoPlayer</div>
</body></html>
